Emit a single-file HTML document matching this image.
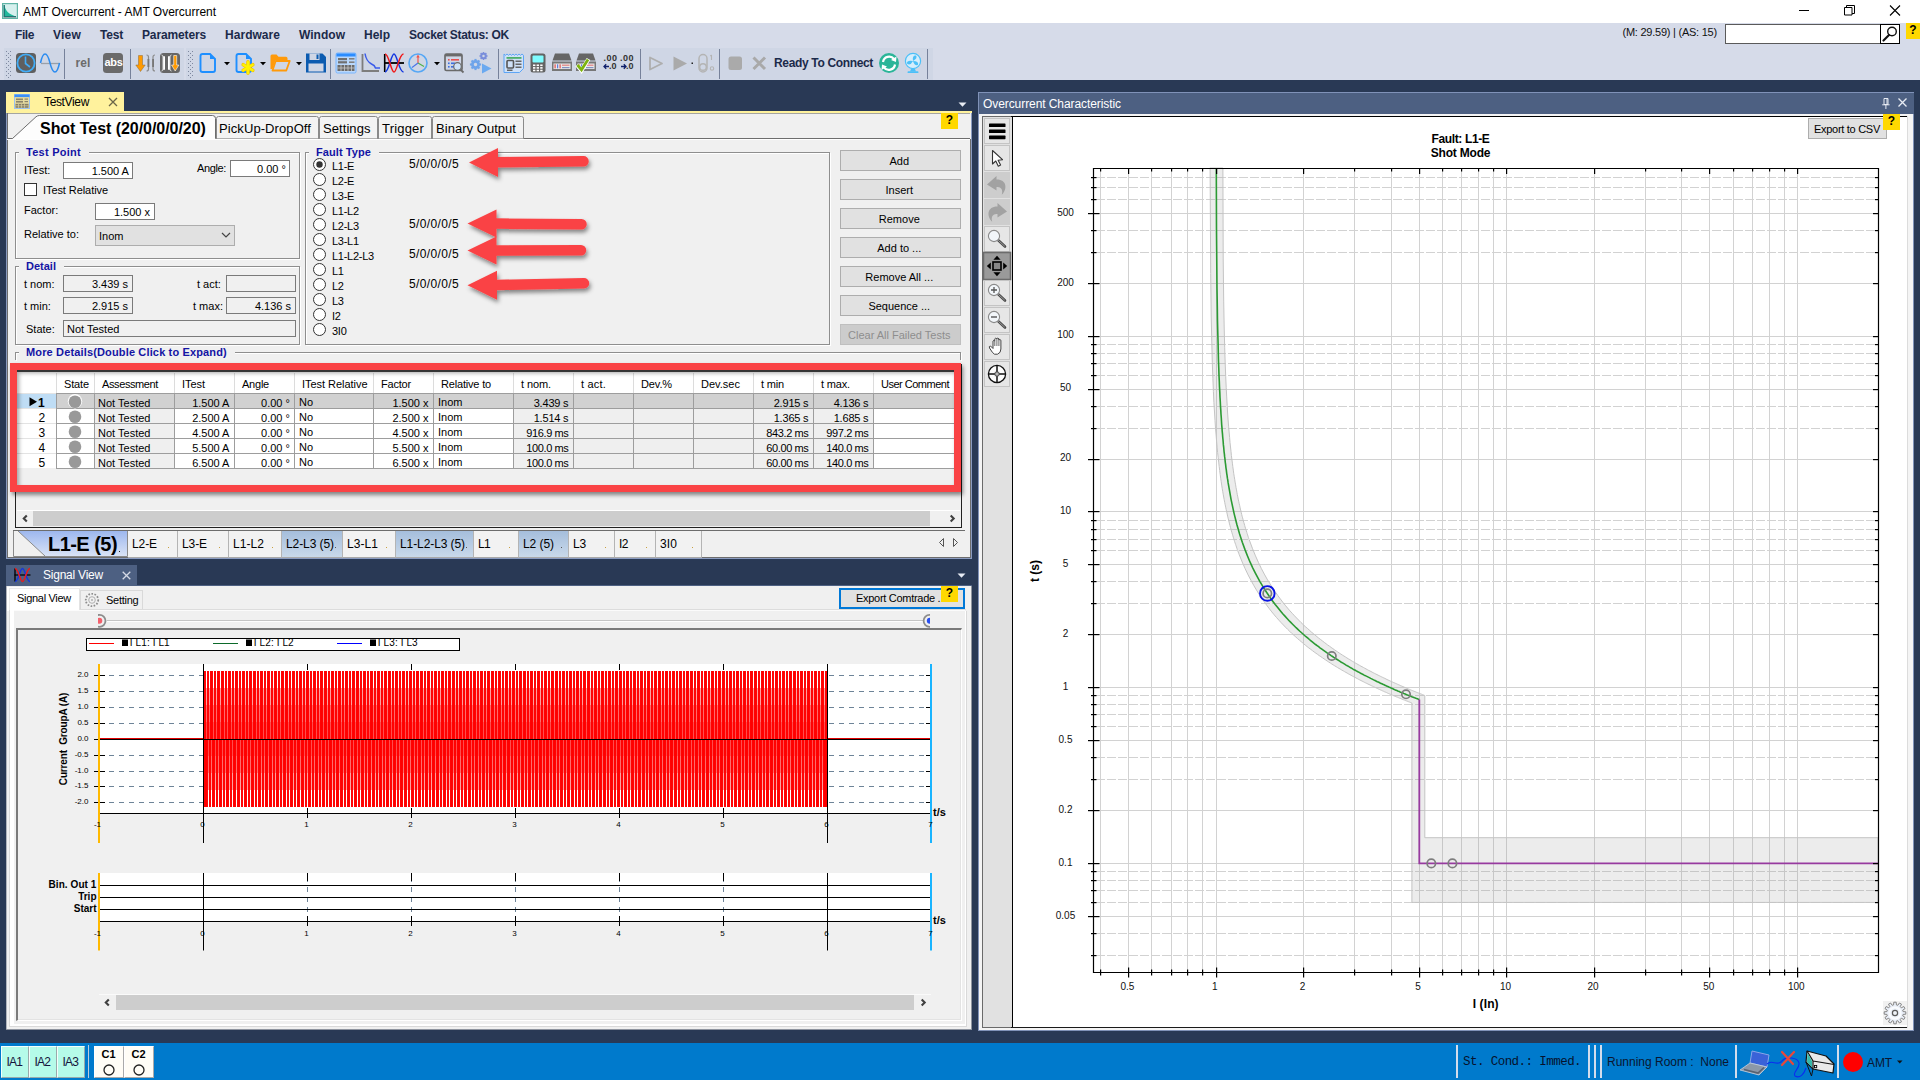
<!DOCTYPE html>
<html><head><meta charset="utf-8"><title>AMT Overcurrent</title>
<style>
html,body{margin:0;padding:0;}
body{width:1920px;height:1080px;overflow:hidden;background:#293955;font-family:"Liberation Sans",sans-serif;font-size:11px;position:relative;}
div,svg,span{position:absolute;}
svg{overflow:visible;}
</style></head><body>

<div style="left:0px;top:0px;width:1920px;height:23px;background:#ffffff;"></div>
<div style="top:3.50px;height:16px;line-height:16px;font-size:12px;color:#000;white-space:pre;letter-spacing:-0.017px;left:23px;">AMT Overcurrent - AMT Overcurrent</div>
<div style="left:0px;top:23px;width:1920px;height:24px;background:#d6dbe9;"></div>
<div style="left:0px;top:47px;width:1920px;height:33px;background:#d6dbe9;"></div>
<div style="left:4px;top:47px;width:929px;height:33px;background:#cfd6e5;"></div>
<svg style="left:2px;top:3px;" width="16" height="16" viewBox="0 0 16 16">
<rect x="0.6" y="0.6" width="14.8" height="14.8" fill="#d6f0ee" stroke="#5fb4a6" stroke-width="1.2"/>
<path d="M2.3 2.3 C3.5 8 7 11.5 13.8 13.4 L2.3 13.4 Z" fill="#22b89c"/>
<path d="M2.2 2 V13.6 H14" fill="none" stroke="#0e6f6c" stroke-width="1.3"/>
<path d="M1.8 14.3 H14" stroke="#8e9aa0" stroke-width=".8"/>
</svg>
<svg style="left:1790px;top:0px;" width="130" height="23" viewBox="0 0 130 23">
<path d="M9 10.5 H19" stroke="#000" stroke-width="1" fill="none"/>
<path d="M54.5 7.5 h7.5 v7.5 h-7.5 z M56.5 7.5 v-2 h8 v8 h-2.5" stroke="#000" stroke-width="1" fill="none"/>
<path d="M100 5.5 L110 15.5 M110 5.5 L100 15.5" stroke="#000" stroke-width="1.1" fill="none"/>
</svg>
<div style="top:26.50px;height:16px;line-height:16px;font-size:12px;color:#1b2a4a;white-space:pre;font-weight:bold;letter-spacing:-0.414px;left:15px;">File</div>
<div style="top:26.50px;height:16px;line-height:16px;font-size:12px;color:#1b2a4a;white-space:pre;font-weight:bold;letter-spacing:0.223px;left:53px;">View</div>
<div style="top:26.50px;height:16px;line-height:16px;font-size:12px;color:#1b2a4a;white-space:pre;font-weight:bold;letter-spacing:-0.195px;left:100px;">Test</div>
<div style="top:26.50px;height:16px;line-height:16px;font-size:12px;color:#1b2a4a;white-space:pre;font-weight:bold;letter-spacing:-0.138px;left:142px;">Parameters</div>
<div style="top:26.50px;height:16px;line-height:16px;font-size:12px;color:#1b2a4a;white-space:pre;font-weight:bold;letter-spacing:0.039px;left:225px;">Hardware</div>
<div style="top:26.50px;height:16px;line-height:16px;font-size:12px;color:#1b2a4a;white-space:pre;font-weight:bold;letter-spacing:0.023px;left:299px;">Window</div>
<div style="top:26.50px;height:16px;line-height:16px;font-size:12px;color:#1b2a4a;white-space:pre;font-weight:bold;left:364px;">Help</div>
<div style="top:26.50px;height:16px;line-height:16px;font-size:12px;color:#1b2a4a;white-space:pre;font-weight:bold;letter-spacing:-0.275px;left:409px;">Socket Status: OK</div>
<div style="top:25.00px;height:15px;line-height:15px;font-size:11px;color:#111;white-space:pre;letter-spacing:-0.239px;left:1622.5px;">(M: 29.59) | (AS: 15)</div>
<div style="left:1725px;top:24px;width:156px;height:20px;background:#fff;border:1px solid #5a5a5a;box-sizing:border-box;"></div>
<div style="left:1880px;top:24px;width:20px;height:20px;background:#fff;border:1px solid #000;box-sizing:border-box;"></div>
<svg style="left:1880px;top:24px;" width="20" height="20" viewBox="0 0 20 20">
<circle cx="12" cy="7.5" r="4.3" fill="none" stroke="#111" stroke-width="1.4"/>
<path d="M9 11 L3.5 16.5" stroke="#111" stroke-width="2.2" stroke-linecap="round"/>
</svg>
<div style="left:1906px;top:23px;width:14px;height:16px;background:#ffd800;"></div>
<div style="top:22.00px;height:16px;line-height:16px;font-size:12px;color:#000;white-space:pre;font-weight:bold;left:1909.34px;">?</div>
<div style="left:184px;top:47px;width:2px;height:33px;background:#d6dbe9;"></div>
<div style="left:0px;top:47px;width:1920px;height:1px;background:#d6dbe9;"></div>
<svg style="left:0;top:0" width="400" height="80"><rect x="6" y="51" width="1" height="1" fill="#7d879e"/><rect x="10" y="51" width="1" height="1" fill="#7d879e"/><rect x="8" y="53" width="1" height="1" fill="#7d879e"/><rect x="6" y="55" width="1" height="1" fill="#7d879e"/><rect x="10" y="55" width="1" height="1" fill="#7d879e"/><rect x="8" y="57" width="1" height="1" fill="#7d879e"/><rect x="6" y="59" width="1" height="1" fill="#7d879e"/><rect x="10" y="59" width="1" height="1" fill="#7d879e"/><rect x="8" y="61" width="1" height="1" fill="#7d879e"/><rect x="6" y="63" width="1" height="1" fill="#7d879e"/><rect x="10" y="63" width="1" height="1" fill="#7d879e"/><rect x="8" y="65" width="1" height="1" fill="#7d879e"/><rect x="6" y="67" width="1" height="1" fill="#7d879e"/><rect x="10" y="67" width="1" height="1" fill="#7d879e"/><rect x="8" y="69" width="1" height="1" fill="#7d879e"/><rect x="6" y="71" width="1" height="1" fill="#7d879e"/><rect x="10" y="71" width="1" height="1" fill="#7d879e"/><rect x="8" y="73" width="1" height="1" fill="#7d879e"/><rect x="6" y="75" width="1" height="1" fill="#7d879e"/><rect x="10" y="75" width="1" height="1" fill="#7d879e"/><rect x="8" y="77" width="1" height="1" fill="#7d879e"/></svg>
<svg style="left:0;top:0" width="400" height="80"><rect x="188" y="51" width="1" height="1" fill="#7d879e"/><rect x="192" y="51" width="1" height="1" fill="#7d879e"/><rect x="190" y="53" width="1" height="1" fill="#7d879e"/><rect x="188" y="55" width="1" height="1" fill="#7d879e"/><rect x="192" y="55" width="1" height="1" fill="#7d879e"/><rect x="190" y="57" width="1" height="1" fill="#7d879e"/><rect x="188" y="59" width="1" height="1" fill="#7d879e"/><rect x="192" y="59" width="1" height="1" fill="#7d879e"/><rect x="190" y="61" width="1" height="1" fill="#7d879e"/><rect x="188" y="63" width="1" height="1" fill="#7d879e"/><rect x="192" y="63" width="1" height="1" fill="#7d879e"/><rect x="190" y="65" width="1" height="1" fill="#7d879e"/><rect x="188" y="67" width="1" height="1" fill="#7d879e"/><rect x="192" y="67" width="1" height="1" fill="#7d879e"/><rect x="190" y="69" width="1" height="1" fill="#7d879e"/><rect x="188" y="71" width="1" height="1" fill="#7d879e"/><rect x="192" y="71" width="1" height="1" fill="#7d879e"/><rect x="190" y="73" width="1" height="1" fill="#7d879e"/><rect x="188" y="75" width="1" height="1" fill="#7d879e"/><rect x="192" y="75" width="1" height="1" fill="#7d879e"/><rect x="190" y="77" width="1" height="1" fill="#7d879e"/></svg>
<div style="left:64px;top:49px;width:1px;height:30px;background:#76819a;"></div>
<div style="left:130px;top:49px;width:1px;height:30px;background:#76819a;"></div>
<div style="left:330px;top:49px;width:1px;height:30px;background:#76819a;"></div>
<div style="left:498px;top:49px;width:1px;height:30px;background:#76819a;"></div>
<div style="left:640px;top:49px;width:1px;height:30px;background:#76819a;"></div>
<div style="left:719px;top:49px;width:1px;height:30px;background:#76819a;"></div>
<div style="left:927px;top:49px;width:1px;height:30px;background:#76819a;"></div>
<svg style="left:0;top:0" width="960" height="80"><rect x="16" y="53" width="20" height="20" rx="3.5" fill="#5f5f5f"/><circle cx="26" cy="63" r="8.6" fill="none" stroke="#42adf7" stroke-width="1.8"/><path d="M25.5 56.5 V63.5 L30 67" fill="none" stroke="#42adf7" stroke-width="1.6"/><path d="M41 63.5 H60" stroke="#9aa0a8" stroke-width="1.3"/><path d="M40.5 63 C43 51 47 51 50 63 C53 75 57 75 59.5 63" fill="none" stroke="#2c8cf0" stroke-width="1.5"/><rect x="103" y="53" width="20" height="20" rx="3.5" fill="#6a6a6a"/><path d="M138.5 55.5 h4 v9.5 h2.7 l-4.7 6.5 l-4.7 -6.5 h2.7 z" fill="#ff9a00" stroke="#8a6a3a" stroke-width=".5"/><path d="M146.5 55 q2 0 2 2 v12 q0 2 -2 2" fill="none" stroke="#8b8b8b" stroke-width="1.2"/><rect x="147.5" y="59" width="1.8" height="8" fill="#777"/><path d="M155 55 q-2 0 -2 2 v12 q0 2 2 2" fill="none" stroke="#8b8b8b" stroke-width="1.2"/><rect x="152.2" y="59" width="1.8" height="8" fill="#777"/><rect x="160" y="53" width="20" height="20" rx="3.5" fill="#666"/><rect x="163" y="56" width="2" height="14" rx="1" fill="#fff"/><rect x="168" y="56" width="2" height="14" rx="1" fill="#fff"/><path d="M161.5 55 q1.5 0 1.5 2 v12 q0 2 -1.5 2 M171.5 55 q-1.5 0 -1.5 2 v12 q0 2 1.5 2" fill="none" stroke="#ddd" stroke-width="1"/><path d="M173.7 55.5 h3 v9.5 h2.2 l-3.7 6 l-3.7 -6 h2.2 z" fill="#ff9a00" stroke="#fff" stroke-width=".6"/><path d="M202.5 54 h7.5 l5 5 v11 q0 2 -2 2 h-10.5 q-2 0 -2 -2 v-14 q0 -2 2 -2 z" fill="none" stroke="#1e8fff" stroke-width="1.9"/><path d="M210 54 v5 h5 z" fill="#1e8fff"/><path d="M238.5 54 h7.5 l5 5 v11 q0 2 -2 2 h-10.5 q-2 0 -2 -2 v-14 q0 -2 2 -2 z" fill="none" stroke="#1e8fff" stroke-width="1.9"/><path d="M246 54 v5 h5 z" fill="#1e8fff"/><path d="M248.0 73.1 L248.0 61.9" stroke="#f2c400" stroke-width="3.6" stroke-linecap="round"/><path d="M252.8 70.3 L243.2 64.7" stroke="#f2c400" stroke-width="3.6" stroke-linecap="round"/><path d="M243.2 70.3 L252.8 64.7" stroke="#f2c400" stroke-width="3.6" stroke-linecap="round"/><path d="M248.0 72.9 L248.0 62.1" stroke="#fff200" stroke-width="2.4" stroke-linecap="round"/><path d="M252.7 70.2 L243.3 64.8" stroke="#fff200" stroke-width="2.4" stroke-linecap="round"/><path d="M243.3 70.2 L252.7 64.8" stroke="#fff200" stroke-width="2.4" stroke-linecap="round"/><path d="M270.5 56 q0 -1.5 1.5 -1.5 h4.5 l2 2.2 h7.5 q1.5 0 1.5 1.5 v1.8 h-12 l-3 9 h-2 z" fill="#ff9a0a"/><path d="M272.5 70.5 l3.2 -9.5 h14 l-3.4 9.5 z" fill="none" stroke="#ff9a0a" stroke-width="1.8" stroke-linejoin="round"/><path d="M306 53.5 h16.5 l3.5 3.5 v15.5 h-20 z" fill="#0b5bb0"/><rect x="309.5" y="53.5" width="10" height="6.5" fill="#cfd6e5"/><rect x="316.5" y="54.5" width="2" height="4.5" fill="#0b5bb0"/><rect x="308.5" y="63.5" width="15" height="8" fill="#cfd6e5"/><rect x="336" y="53" width="20" height="20" rx="1.5" fill="#b9d7fb" stroke="#78b5ff" stroke-width="1"/><rect x="336.5" y="53.5" width="19" height="3" fill="#2b8cff"/><rect x="338" y="58" width="9" height="2.2" fill="#707070"/><rect x="338" y="61.2" width="9" height="2.2" fill="#707070"/><rect x="349" y="58" width="5.5" height="1.6" fill="#808080"/><rect x="349" y="61.4" width="5.5" height="1.6" fill="#808080"/><rect x="337.5" y="65" width="17" height="6" fill="#6b6b6b"/><path d="M337.5 68 h17 M341 65 v6 M344.5 65 v6 M348 65 v6 M351.5 65 v6" stroke="#c9c9c9" stroke-width=".8"/><path d="M362.5 54 V71 H379" fill="none" stroke="#7d7d7d" stroke-width="1.8"/><path d="M365 53.5 C366 60 368 62 371.5 64 C374 65 375 66 375.5 68 H380" fill="none" stroke="#3a5bea" stroke-width="1.5"/><path d="M384.7 54 V72" stroke="#000" stroke-width="1.6"/><path d="M384 63 H404" stroke="#000" stroke-width="1.8"/><path d="M385 72 C389 72 391 54 394 54 C397 54 399 72 403.5 72" fill="none" stroke="#1236e0" stroke-width="1.5"/><path d="M385 54 C389 54 391 72 394 72 C397 72 399 54 403.5 54" fill="none" stroke="#f01818" stroke-width="1.5"/><circle cx="418" cy="63" r="9" fill="none" stroke="#55a7f5" stroke-width="1.6"/><path d="M418 63 V56" stroke="#f0524a" stroke-width="1.2"/><path d="M416.3 57.5 L418 54.5 L419.7 57.5 z" fill="#f0524a"/><path d="M418 63 L424 66.5" stroke="#4fb04a" stroke-width="1.2"/><path d="M418 63 L412 67.5" stroke="#4a74e8" stroke-width="1.2"/><rect x="445" y="54" width="17" height="16.5" rx="1.5" fill="none" stroke="#6a6a6a" stroke-width="1.7"/><rect x="445" y="54" width="17" height="2.4" fill="#6a6a6a"/><rect x="448" y="59" width="1.6" height="1.6" fill="#e85050"/><rect x="451" y="59" width="8" height="1.6" fill="#e85050"/><rect x="448" y="62.5" width="1.6" height="1.6" fill="#3c6ee0"/><rect x="451" y="62.5" width="4" height="1.6" fill="#3c6ee0"/><rect x="448" y="66" width="1.6" height="1.6" fill="#3c6ee0"/><rect x="451" y="66" width="3" height="1.6" fill="#3c6ee0"/><circle cx="457.5" cy="66.5" r="3.8" fill="#cfe2f7" stroke="#6a6a6a" stroke-width="1.2"/><path d="M460.3 69.3 L463.5 72.5" stroke="#6a6a6a" stroke-width="1.8"/><circle cx="475.5" cy="64.5" r="3.10" fill="none" stroke="#6ea4ea" stroke-width="2.75"/><path d="M479.00 64.50 L481.10 64.50" stroke="#6ea4ea" stroke-width="2.10"/><path d="M477.97 66.97 L479.46 68.46" stroke="#6ea4ea" stroke-width="2.10"/><path d="M475.50 68.00 L475.50 70.10" stroke="#6ea4ea" stroke-width="2.10"/><path d="M473.03 66.97 L471.54 68.46" stroke="#6ea4ea" stroke-width="2.10"/><path d="M472.00 64.50 L469.90 64.50" stroke="#6ea4ea" stroke-width="2.10"/><path d="M473.03 62.03 L471.54 60.54" stroke="#6ea4ea" stroke-width="2.10"/><path d="M475.50 61.00 L475.50 58.90" stroke="#6ea4ea" stroke-width="2.10"/><path d="M477.97 62.03 L479.46 60.54" stroke="#6ea4ea" stroke-width="2.10"/><circle cx="483.5" cy="56" r="2.23" fill="none" stroke="#7a8edb" stroke-width="1.98"/><path d="M486.02 56.00 L487.53 56.00" stroke="#7a8edb" stroke-width="1.51"/><path d="M485.28 57.78 L486.35 58.85" stroke="#7a8edb" stroke-width="1.51"/><path d="M483.50 58.52 L483.50 60.03" stroke="#7a8edb" stroke-width="1.51"/><path d="M481.72 57.78 L480.65 58.85" stroke="#7a8edb" stroke-width="1.51"/><path d="M480.98 56.00 L479.47 56.00" stroke="#7a8edb" stroke-width="1.51"/><path d="M481.72 54.22 L480.65 53.15" stroke="#7a8edb" stroke-width="1.51"/><path d="M483.50 53.48 L483.50 51.97" stroke="#7a8edb" stroke-width="1.51"/><path d="M485.28 54.22 L486.35 53.15" stroke="#7a8edb" stroke-width="1.51"/><path d="M482 63.5 L491.5 68.5 L482 73.5 z" fill="#6aa9f0"/><path d="M504 54 l1.5 1.3 l1.5 -1.3 l1.5 1.3 l1.5 -1.3 l1.5 1.3 l1.5 -1.3 l1.5 1.3 l1.5 -1.3 l1.5 1.3 l1.5 -1.3 l1.5 1.3 l1.5 -1.3 l1.5 1.3 V68.5 L519.5 72.5 H504 Z" fill="#cfe1f8" stroke="#5da5f5" stroke-width="1"/><rect x="506.5" y="57" width="15" height="1.8" fill="#4caf6a"/><rect x="507" y="60.5" width="6.5" height="7.5" rx="1" fill="#cfe1f8" stroke="#555" stroke-width="1.6"/><rect x="515.5" y="60.5" width="6" height="1.5" fill="#666"/><rect x="515.5" y="63.5" width="6" height="1.5" fill="#666"/><rect x="515.5" y="66.5" width="6" height="1.5" fill="#666"/><rect x="507" y="69.5" width="5.5" height="1.5" fill="#666"/><rect x="530.5" y="53.5" width="15" height="19" rx="2.5" fill="#636363"/><rect x="532.5" y="55.5" width="11" height="7" rx="1" fill="#7ffcff"/><rect x="533.0" y="64.5" width="2.4" height="1.6" fill="#fff"/><rect x="533.0" y="67.1" width="2.4" height="1.6" fill="#fff"/><rect x="533.0" y="69.7" width="2.4" height="1.6" fill="#fff"/><rect x="536.6" y="64.5" width="2.4" height="1.6" fill="#fff"/><rect x="536.6" y="67.1" width="2.4" height="1.6" fill="#fff"/><rect x="536.6" y="69.7" width="2.4" height="1.6" fill="#fff"/><rect x="540.2" y="64.5" width="2.4" height="1.6" fill="#fff"/><rect x="540.2" y="67.1" width="2.4" height="1.6" fill="#fff"/><rect x="540.2" y="69.7" width="2.4" height="1.6" fill="#fff"/><path d="M555 53.5 h14 l2.5 7 h-19 z" fill="#666"/><rect x="552" y="61.5" width="20" height="9.5" fill="#777"/><rect x="553.5" y="63.5" width="17" height="5.5" fill="#e9e9e9"/><rect x="554.5" y="64.3" width="1.2" height="4" fill="#e05050"/><rect x="557" y="64.3" width="1.2" height="4" fill="#5a7ee0"/><rect x="559.5" y="64.3" width="1.2" height="4" fill="#e05050"/><rect x="562" y="64.6" width="7.5" height="1.2" fill="#e08080"/><rect x="562" y="67" width="7.5" height="1.2" fill="#8090c0"/><path d="M579 53.5 h14 l2.5 7 h-19 z" fill="#666"/><rect x="576" y="61.5" width="20" height="9.5" fill="#777"/><rect x="577.5" y="63.5" width="17" height="5.5" fill="#e9e9e9"/><rect x="578.5" y="64.3" width="1.2" height="4" fill="#e05050"/><rect x="581" y="64.3" width="1.2" height="4" fill="#5a7ee0"/><rect x="583.5" y="64.3" width="1.2" height="4" fill="#e05050"/><rect x="586" y="64.6" width="7.5" height="1.2" fill="#e08080"/><rect x="586" y="67" width="7.5" height="1.2" fill="#8090c0"/><path d="M577 65 L581.5 70.5 L588.5 59" fill="none" stroke="#fff" stroke-width="4.2"/><path d="M577.5 65 L581.5 69.8 L588 59.5" fill="none" stroke="#7db30f" stroke-width="2.8"/><path d="M650 57.5 L662 63.5 L650 69.5 z" fill="none" stroke="#aeaeae" stroke-width="1.8" stroke-linejoin="round"/><path d="M673.5 56.5 L687 63.5 L673.5 70.5 z" fill="#aaa"/><rect x="691.5" y="62.5" width="1.5" height="1.5" fill="#222"/><rect x="699" y="54.5" width="8" height="17.5" rx="4" fill="none" stroke="#b4b4b4" stroke-width="1.5"/><circle cx="703" cy="67" r="3.3" fill="none" stroke="#b4b4b4" stroke-width="1.4"/><path d="M711.5 55 V60 M710.3 56 L711.5 55" stroke="#b4b4b4" stroke-width="1.1" fill="none"/><circle cx="712" cy="68.5" r="1.7" fill="none" stroke="#b4b4b4" stroke-width="1.1"/><rect x="728.5" y="56.5" width="13.5" height="13.5" rx="2.5" fill="#aaa"/><path d="M753.5 57.5 L765 69 M765 57.5 L753.5 69" stroke="#a9a9a9" stroke-width="3"/><circle cx="889" cy="63" r="10" fill="#2bb598"/><path d="M883 62 A6.2 6.2 0 0 1 894 59" fill="none" stroke="#fff" stroke-width="2.2"/><path d="M896.5 56.5 L896 62 L891 60 z" fill="#fff"/><path d="M895 64.5 A6.2 6.2 0 0 1 884 67.5" fill="none" stroke="#fff" stroke-width="2.2"/><path d="M881.5 70 L882 64.5 L887 66.5 z" fill="#fff"/><circle cx="913" cy="61" r="7.6" fill="#d6eefc" stroke="#4cc0f8" stroke-width="1.2"/><path d="M913 61 q-1 -6 3 -5.5 q2 2.5 -3 5.5 q6 0 5 3.8 q-3 2 -5 -3.8 q-3 5.5 -6 2.5 q-0.5 -3.5 6 -2.5" fill="#4cc0f8"/><path d="M911 69 h4 l1 2.5 h-6 z" fill="#4cc0f8"/><rect x="907.5" y="71.3" width="11" height="1.8" rx=".9" fill="#4cc0f8"/></svg>
<svg style="left:223.5px;top:62px;" width="6" height="4" viewBox="0 0 6 4"><path d="M0 0 H6 L3 3.2 Z" fill="#000"/></svg>
<svg style="left:259.5px;top:62px;" width="6" height="4" viewBox="0 0 6 4"><path d="M0 0 H6 L3 3.2 Z" fill="#000"/></svg>
<svg style="left:295.5px;top:62px;" width="6" height="4" viewBox="0 0 6 4"><path d="M0 0 H6 L3 3.2 Z" fill="#000"/></svg>
<svg style="left:433.5px;top:62px;" width="6" height="4" viewBox="0 0 6 4"><path d="M0 0 H6 L3 3.2 Z" fill="#000"/></svg>
<div style="top:54.50px;height:16px;line-height:16px;font-size:12px;color:#6b6b6b;white-space:pre;font-weight:bold;letter-spacing:0.109px;left:75.5px;">rel</div>
<div style="top:54.50px;height:15px;line-height:15px;font-size:11px;color:#fff;white-space:pre;font-weight:bold;letter-spacing:-0.323px;left:104.5px;">abs</div>
<div style="top:52.00px;height:13px;line-height:13px;font-size:9px;color:#333;white-space:pre;font-weight:bold;letter-spacing:0.500px;left:603.5px;">.00</div>
<div style="top:52.00px;height:13px;line-height:13px;font-size:9px;color:#333;white-space:pre;font-weight:bold;letter-spacing:0.500px;left:620px;">.00</div>
<div style="top:60.00px;height:13px;line-height:13px;font-size:9px;color:#333;white-space:pre;font-weight:bold;left:609px;">.0</div>
<div style="top:60.00px;height:13px;line-height:13px;font-size:9px;color:#333;white-space:pre;font-weight:bold;left:626px;">.0</div>
<svg style="left:603px;top:63px;" width="30" height="8" viewBox="0 0 30 8"><path d="M1 3.5 H6 M3.2 1.3 L1 3.5 L3.2 5.7" stroke="#10206a" stroke-width="1.3" fill="none"/><path d="M18 3.5 H23 M20.8 1.3 L23 3.5 L20.8 5.7" stroke="#10206a" stroke-width="1.3" fill="none"/></svg>
<div style="top:54.50px;height:16px;line-height:16px;font-size:12px;color:#1b2a4a;white-space:pre;font-weight:bold;letter-spacing:-0.340px;left:774px;">Ready To Connect</div>
<div style="left:6px;top:92px;width:118px;height:20px;background:#fff29d;"></div>
<div style="left:6px;top:111px;width:966px;height:2px;background:#fff29d;"></div>
<div style="top:94.00px;height:16px;line-height:16px;font-size:12px;color:#000;white-space:pre;letter-spacing:-0.350px;left:44px;">TestView</div>
<svg style="left:108px;top:97px;" width="10" height="10" viewBox="0 0 10 10"><path d="M1 1 L9 9 M9 1 L1 9" stroke="#6b6648" stroke-width="1.3" fill="none"/></svg>
<svg style="left:14px;top:94px;" width="16" height="15" viewBox="0 0 16 15"><rect x="0.5" y="0.5" width="15" height="14" fill="#e7dca0" stroke="#9cc3f2" stroke-width="1"/>
<rect x="0.5" y="0.5" width="15" height="2.6" fill="#3b8ff5"/>
<rect x="2" y="4.5" width="7" height="1.6" fill="#8a846a"/><rect x="2" y="7" width="7" height="1.6" fill="#8a846a"/>
<rect x="10.5" y="4.5" width="3.5" height="1.2" fill="#8a846a"/><rect x="10.5" y="7" width="3.5" height="1.2" fill="#8a846a"/>
<rect x="1.5" y="9.8" width="13" height="4" fill="#857f66"/><path d="M1.5 11.8 h13 M4.5 9.8 v4 M7.5 9.8 v4 M10.5 9.8 v4" stroke="#d8cf9c" stroke-width=".7"/></svg>
<svg style="left:957.5px;top:101.7px;" width="10" height="6" viewBox="0 0 10 6"><path d="M0.5 0.5 H8.5 L4.5 4.8 Z" fill="#e8ecf4"/></svg>
<div style="left:6px;top:113px;width:966px;height:446px;background:#f0f0f0;"></div>
<div style="left:6px;top:113px;width:1px;height:446px;background:#8a9bc0;"></div>
<div style="left:7px;top:113px;width:1px;height:445px;background:#6d6d6d;"></div>
<div style="left:8px;top:113px;width:962px;height:1px;background:#a5a5a0;"></div>
<div style="left:970px;top:139px;width:1px;height:419px;background:#6d6d6d;"></div>
<div style="left:7px;top:557px;width:964px;height:1px;background:#6d6d6d;"></div>
<div style="left:971px;top:113px;width:1px;height:446px;background:#8a9bc0;"></div>
<div style="left:6px;top:558px;width:966px;height:1px;background:#8a9bc0;"></div>
<div style="left:7px;top:138px;width:963px;height:1px;background:#6d6d6d;"></div>
<div style="left:7px;top:139px;width:963px;height:1px;background:#ffffff;"></div>
<svg style="left:7px;top:114px;" width="520" height="26" viewBox="0 0 520 26">
<path d="M3 24.5 L5.5 24.5 L29 2.8 Q30.5 1.5 32.5 1.5 H205.5 Q208.5 1.5 208.5 4.5 V25.5 H3 Z" fill="#fdfdfd"/>
<path d="M3 24.5 L5.5 24.5 L29 2.8 Q30.5 1.5 32.5 1.5 H205.5 Q208.5 1.5 208.5 4.5 V24.5" fill="none" stroke="#6d6d6d" stroke-width="1"/>
<path d="M209.5 24.5 V4.5 Q209.5 2.5 211.5 2.5 H309.5 Q311.5 2.5 311.5 4.5 V24.5" fill="#f3f3f3" stroke="#8a8a8a" stroke-width="1"/>
<path d="M312.5 24.5 V4.5 Q312.5 2.5 314.5 2.5 H368.5 Q370.5 2.5 370.5 4.5 V24.5" fill="#f3f3f3" stroke="#8a8a8a" stroke-width="1"/>
<path d="M371.5 24.5 V4.5 Q371.5 2.5 373.5 2.5 H422.5 Q424.5 2.5 424.5 4.5 V24.5" fill="#f3f3f3" stroke="#8a8a8a" stroke-width="1"/>
<path d="M425.5 24.5 V4.5 Q425.5 2.5 427.5 2.5 H514.5 Q516.5 2.5 516.5 4.5 V24.5" fill="#f3f3f3" stroke="#8a8a8a" stroke-width="1"/>
</svg>
<div style="top:118.80px;height:20px;line-height:20px;font-size:16px;color:#000;white-space:pre;font-weight:bold;letter-spacing:-0.044px;left:40px;">Shot Test (20/0/0/0/20)</div>
<div style="top:119.50px;height:18px;line-height:18px;font-size:13px;color:#000;white-space:pre;letter-spacing:0.086px;left:219px;">PickUp-DropOff</div>
<div style="top:119.50px;height:18px;line-height:18px;font-size:13px;color:#000;white-space:pre;letter-spacing:0.064px;left:323px;">Settings</div>
<div style="top:119.50px;height:18px;line-height:18px;font-size:13px;color:#000;white-space:pre;letter-spacing:0.185px;left:382px;">Trigger</div>
<div style="top:119.50px;height:18px;line-height:18px;font-size:13px;color:#000;white-space:pre;letter-spacing:0.038px;left:436px;">Binary Output</div>
<div style="left:941px;top:113px;width:17px;height:16px;background:#ffd800;"></div>
<div style="top:111.80px;height:16px;line-height:16px;font-size:12px;color:#000;white-space:pre;font-weight:bold;left:945.84px;">?</div>
<div style="left:16px;top:153px;width:285px;height:107px;border:1px solid #ffffff;box-sizing:border-box;"></div>
<div style="left:15px;top:152px;width:285px;height:107px;border:1px solid #8e8e8e;box-sizing:border-box;"></div>
<div style="left:19px;top:150px;width:70px;height:5px;background:#f0f0f0;"></div>
<div style="top:144.50px;height:15px;line-height:15px;font-size:11px;color:#1414a4;white-space:pre;font-weight:bold;letter-spacing:0.263px;left:26px;">Test Point</div>
<div style="top:163.00px;height:15px;line-height:15px;font-size:11px;color:#000;white-space:pre;left:24px;">ITest:</div>
<div style="left:63px;top:162px;width:70px;height:17px;background:#fff;border:1px solid #7a7a7a;box-sizing:border-box;"></div>
<div style="top:163.50px;height:15px;line-height:15px;font-size:11px;color:#000;white-space:pre;left:91.64px;">1.500 A</div>
<div style="top:161.00px;height:15px;line-height:15px;font-size:11px;color:#000;white-space:pre;letter-spacing:-0.370px;left:197px;">Angle:</div>
<div style="left:230px;top:160px;width:60px;height:17px;background:#fff;border:1px solid #7a7a7a;box-sizing:border-box;"></div>
<div style="top:161.50px;height:15px;line-height:15px;font-size:11px;color:#000;white-space:pre;left:257.09px;">0.00 °</div>
<div style="left:24px;top:183px;width:13px;height:13px;background:#fff;border:1px solid #333;box-sizing:border-box;"></div>
<div style="top:182.50px;height:15px;line-height:15px;font-size:11px;color:#000;white-space:pre;letter-spacing:-0.076px;left:43px;">ITest Relative</div>
<div style="top:202.50px;height:15px;line-height:15px;font-size:11px;color:#000;white-space:pre;left:24px;">Factor:</div>
<div style="left:95px;top:203px;width:60px;height:17px;background:#fff;border:1px solid #7a7a7a;box-sizing:border-box;"></div>
<div style="top:204.50px;height:15px;line-height:15px;font-size:11px;color:#000;white-space:pre;left:113.88px;">1.500 x</div>
<div style="top:226.50px;height:15px;line-height:15px;font-size:11px;color:#000;white-space:pre;left:24px;">Relative to:</div>
<div style="left:95px;top:225px;width:140px;height:21px;background:#e1e1e1;border:1px solid #adadad;box-sizing:border-box;"></div>
<div style="top:228.50px;height:15px;line-height:15px;font-size:11px;color:#000;white-space:pre;left:99px;">Inom</div>
<svg style="left:221px;top:232px;" width="10" height="7" viewBox="0 0 10 7"><path d="M1 1 L5 5 L9 1" fill="none" stroke="#444" stroke-width="1.2"/></svg>
<div style="left:16px;top:267px;width:285px;height:79px;border:1px solid #ffffff;box-sizing:border-box;"></div>
<div style="left:15px;top:266px;width:285px;height:79px;border:1px solid #8e8e8e;box-sizing:border-box;"></div>
<div style="left:19px;top:264px;width:45px;height:5px;background:#f0f0f0;"></div>
<div style="top:258.50px;height:15px;line-height:15px;font-size:11px;color:#1414a4;white-space:pre;font-weight:bold;letter-spacing:0.005px;left:26px;">Detail</div>
<div style="top:276.50px;height:15px;line-height:15px;font-size:11px;color:#000;white-space:pre;left:24px;">t nom:</div>
<div style="left:63px;top:275px;width:70px;height:17px;background:#f0f0f0;border:1px solid #7a7a7a;box-sizing:border-box;"></div>
<div style="top:276.50px;height:15px;line-height:15px;font-size:11px;color:#000;white-space:pre;left:91.88px;">3.439 s</div>
<div style="top:276.50px;height:15px;line-height:15px;font-size:11px;color:#000;white-space:pre;left:197px;">t act:</div>
<div style="left:226px;top:275px;width:70px;height:17px;background:#f0f0f0;border:1px solid #7a7a7a;box-sizing:border-box;"></div>
<div style="top:298.50px;height:15px;line-height:15px;font-size:11px;color:#000;white-space:pre;left:24px;">t min:</div>
<div style="left:63px;top:297px;width:70px;height:17px;background:#f0f0f0;border:1px solid #7a7a7a;box-sizing:border-box;"></div>
<div style="top:298.50px;height:15px;line-height:15px;font-size:11px;color:#000;white-space:pre;left:91.88px;">2.915 s</div>
<div style="top:298.50px;height:15px;line-height:15px;font-size:11px;color:#000;white-space:pre;left:193px;">t max:</div>
<div style="left:226px;top:297px;width:70px;height:17px;background:#f0f0f0;border:1px solid #7a7a7a;box-sizing:border-box;"></div>
<div style="top:298.50px;height:15px;line-height:15px;font-size:11px;color:#000;white-space:pre;left:254.88px;">4.136 s</div>
<div style="top:321.50px;height:15px;line-height:15px;font-size:11px;color:#000;white-space:pre;left:26px;">State:</div>
<div style="left:63px;top:320px;width:233px;height:17px;background:#f0f0f0;border:1px solid #7a7a7a;box-sizing:border-box;"></div>
<div style="top:321.50px;height:15px;line-height:15px;font-size:11px;color:#000;white-space:pre;left:67px;">Not Tested</div>
<div style="left:306px;top:153px;width:525px;height:193px;border:1px solid #ffffff;box-sizing:border-box;"></div>
<div style="left:305px;top:152px;width:525px;height:193px;border:1px solid #8e8e8e;box-sizing:border-box;"></div>
<div style="left:309px;top:150px;width:70px;height:5px;background:#f0f0f0;"></div>
<div style="top:144.50px;height:15px;line-height:15px;font-size:11px;color:#1414a4;white-space:pre;font-weight:bold;letter-spacing:0.078px;left:316px;">Fault Type</div>
<div style="top:158.50px;height:15px;line-height:15px;font-size:11px;color:#000;white-space:pre;letter-spacing:-0.291px;left:332px;">L1-E</div>
<div style="top:173.50px;height:15px;line-height:15px;font-size:11px;color:#000;white-space:pre;letter-spacing:-0.291px;left:332px;">L2-E</div>
<div style="top:188.50px;height:15px;line-height:15px;font-size:11px;color:#000;white-space:pre;letter-spacing:-0.291px;left:332px;">L3-E</div>
<div style="top:203.50px;height:15px;line-height:15px;font-size:11px;color:#000;white-space:pre;letter-spacing:-0.282px;left:332px;">L1-L2</div>
<div style="top:218.50px;height:15px;line-height:15px;font-size:11px;color:#000;white-space:pre;letter-spacing:-0.282px;left:332px;">L2-L3</div>
<div style="top:233.50px;height:15px;line-height:15px;font-size:11px;color:#000;white-space:pre;letter-spacing:-0.282px;left:332px;">L3-L1</div>
<div style="top:248.50px;height:15px;line-height:15px;font-size:11px;color:#000;white-space:pre;letter-spacing:-0.275px;left:332px;">L1-L2-L3</div>
<div style="top:263.50px;height:15px;line-height:15px;font-size:11px;color:#000;white-space:pre;letter-spacing:-0.306px;left:332px;">L1</div>
<div style="top:278.50px;height:15px;line-height:15px;font-size:11px;color:#000;white-space:pre;letter-spacing:-0.306px;left:332px;">L2</div>
<div style="top:293.50px;height:15px;line-height:15px;font-size:11px;color:#000;white-space:pre;letter-spacing:-0.306px;left:332px;">L3</div>
<div style="top:308.50px;height:15px;line-height:15px;font-size:11px;color:#000;white-space:pre;letter-spacing:-0.230px;left:332px;">I2</div>
<div style="top:323.50px;height:15px;line-height:15px;font-size:11px;color:#000;white-space:pre;letter-spacing:-0.255px;left:332px;">3I0</div>
<svg style="left:0;top:0" width="400" height="400"><circle cx="319.5" cy="164.5" r="6" fill="#fff" stroke="#333" stroke-width="1"/><circle cx="319.5" cy="164.5" r="3.2" fill="#333"/><circle cx="319.5" cy="179.5" r="6" fill="#fff" stroke="#333" stroke-width="1"/><circle cx="319.5" cy="194.5" r="6" fill="#fff" stroke="#333" stroke-width="1"/><circle cx="319.5" cy="209.5" r="6" fill="#fff" stroke="#333" stroke-width="1"/><circle cx="319.5" cy="224.5" r="6" fill="#fff" stroke="#333" stroke-width="1"/><circle cx="319.5" cy="239.5" r="6" fill="#fff" stroke="#333" stroke-width="1"/><circle cx="319.5" cy="254.5" r="6" fill="#fff" stroke="#333" stroke-width="1"/><circle cx="319.5" cy="269.5" r="6" fill="#fff" stroke="#333" stroke-width="1"/><circle cx="319.5" cy="284.5" r="6" fill="#fff" stroke="#333" stroke-width="1"/><circle cx="319.5" cy="299.5" r="6" fill="#fff" stroke="#333" stroke-width="1"/><circle cx="319.5" cy="314.5" r="6" fill="#fff" stroke="#333" stroke-width="1"/><circle cx="319.5" cy="329.5" r="6" fill="#fff" stroke="#333" stroke-width="1"/></svg>
<div style="top:155.70px;height:16px;line-height:16px;font-size:12px;color:#000;white-space:pre;letter-spacing:0.370px;left:409px;">5/0/0/0/5</div>
<div style="top:215.70px;height:16px;line-height:16px;font-size:12px;color:#000;white-space:pre;letter-spacing:0.370px;left:409px;">5/0/0/0/5</div>
<div style="top:245.70px;height:16px;line-height:16px;font-size:12px;color:#000;white-space:pre;letter-spacing:0.370px;left:409px;">5/0/0/0/5</div>
<div style="top:275.70px;height:16px;line-height:16px;font-size:12px;color:#000;white-space:pre;letter-spacing:0.370px;left:409px;">5/0/0/0/5</div>
<svg style="left:0;top:0" width="700" height="400"><defs><filter id="sh" x="-10%" y="-30%" width="120%" height="170%"><feDropShadow dx="1.5" dy="3" stdDeviation="2" flood-color="#000" flood-opacity="0.45"/></filter></defs><g filter="url(#sh)"><path d="M497 162.3 L583.5 161.3" stroke="#fa4345" stroke-width="10.5" stroke-linecap="round" fill="none"/><path d="M469 162.5 L498 148.0 L498 177.0 Z" fill="#fa4345"/><path d="M495.5 223.6 L581.5 224.3" stroke="#fa4345" stroke-width="10.5" stroke-linecap="round" fill="none"/><path d="M467.5 223.5 L496.5 209.5 L496.5 237.5 Z" fill="#fa4345"/><path d="M495.5 250.5 L581 250.2" stroke="#fa4345" stroke-width="10.5" stroke-linecap="round" fill="none"/><path d="M467.5 250.5 L496.5 236.5 L496.5 264.5 Z" fill="#fa4345"/><path d="M496 285.0 L584 283.2" stroke="#fa4345" stroke-width="10.5" stroke-linecap="round" fill="none"/><path d="M467.5 285.3 L497 270.8 L497 299.8 Z" fill="#fa4345"/></g></svg>
<div style="left:840px;top:150px;width:121px;height:21px;background:#e1e1e1;border:1px solid #adadad;box-sizing:border-box;"></div>
<div style="top:153.50px;height:15px;line-height:15px;font-size:11px;color:#000;white-space:pre;left:889.50px;">Add</div>
<div style="left:840px;top:179px;width:121px;height:21px;background:#e1e1e1;border:1px solid #adadad;box-sizing:border-box;"></div>
<div style="top:182.50px;height:15px;line-height:15px;font-size:11px;color:#000;white-space:pre;left:885.53px;">Insert</div>
<div style="left:840px;top:208px;width:121px;height:21px;background:#e1e1e1;border:1px solid #adadad;box-sizing:border-box;"></div>
<div style="top:211.50px;height:15px;line-height:15px;font-size:11px;color:#000;white-space:pre;left:878.82px;">Remove</div>
<div style="left:840px;top:237px;width:121px;height:21px;background:#e1e1e1;border:1px solid #adadad;box-sizing:border-box;"></div>
<div style="top:240.50px;height:15px;line-height:15px;font-size:11px;color:#000;white-space:pre;left:877.25px;">Add to ...</div>
<div style="left:840px;top:266px;width:121px;height:21px;background:#e1e1e1;border:1px solid #adadad;box-sizing:border-box;"></div>
<div style="top:269.50px;height:15px;line-height:15px;font-size:11px;color:#000;white-space:pre;left:865.35px;">Remove All ...</div>
<div style="left:840px;top:295px;width:121px;height:21px;background:#e1e1e1;border:1px solid #adadad;box-sizing:border-box;"></div>
<div style="top:298.50px;height:15px;line-height:15px;font-size:11px;color:#000;white-space:pre;left:868.38px;">Sequence ...</div>
<div style="left:840px;top:324px;width:121px;height:21px;background:#cccccc;border:1px solid #bfbfbf;box-sizing:border-box;"></div>
<div style="top:327.50px;height:15px;line-height:15px;font-size:11px;color:#8e8e8e;white-space:pre;left:848.03px;">Clear All Failed Tests</div>
<div style="left:16px;top:353px;width:946px;height:8px;border:1px solid #ffffff;box-sizing:border-box;border-bottom:none;"></div>
<div style="left:15px;top:352px;width:946px;height:8px;border:1px solid #8e8e8e;box-sizing:border-box;border-bottom:none;"></div>
<div style="left:19px;top:350px;width:216px;height:5px;background:#f0f0f0;"></div>
<div style="top:345.00px;height:15px;line-height:15px;font-size:11px;color:#1414a4;white-space:pre;font-weight:bold;letter-spacing:0.148px;left:26px;">More Details(Double Click to Expand)</div>
<div style="left:15px;top:364px;width:947px;height:164px;background:#f0f0f0;border:1px solid #222;box-sizing:border-box;"></div>
<div style="left:17px;top:372px;width:937px;height:21px;background:#ffffff;"></div>
<div style="left:56px;top:373px;width:1px;height:20px;background:#dcdcdc;"></div>
<div style="top:376.50px;height:15px;line-height:15px;font-size:11px;color:#000;white-space:pre;letter-spacing:-0.144px;left:64px;">State</div>
<div style="left:94px;top:373px;width:1px;height:20px;background:#dcdcdc;"></div>
<div style="top:376.50px;height:15px;line-height:15px;font-size:11px;color:#000;white-space:pre;letter-spacing:-0.394px;left:102px;">Assessment</div>
<div style="left:174px;top:373px;width:1px;height:20px;background:#dcdcdc;"></div>
<div style="top:376.50px;height:15px;line-height:15px;font-size:11px;color:#000;white-space:pre;letter-spacing:-0.050px;left:182px;">ITest</div>
<div style="left:234px;top:373px;width:1px;height:20px;background:#dcdcdc;"></div>
<div style="top:376.50px;height:15px;line-height:15px;font-size:11px;color:#000;white-space:pre;letter-spacing:-0.231px;left:242px;">Angle</div>
<div style="left:294px;top:373px;width:1px;height:20px;background:#dcdcdc;"></div>
<div style="top:376.50px;height:15px;line-height:15px;font-size:11px;color:#000;white-space:pre;letter-spacing:-0.040px;left:302px;">ITest Relative</div>
<div style="left:373px;top:373px;width:1px;height:20px;background:#dcdcdc;"></div>
<div style="top:376.50px;height:15px;line-height:15px;font-size:11px;color:#000;white-space:pre;letter-spacing:-0.198px;left:381px;">Factor</div>
<div style="left:433px;top:373px;width:1px;height:20px;background:#dcdcdc;"></div>
<div style="top:376.50px;height:15px;line-height:15px;font-size:11px;color:#000;white-space:pre;letter-spacing:-0.182px;left:441px;">Relative to</div>
<div style="left:513px;top:373px;width:1px;height:20px;background:#dcdcdc;"></div>
<div style="top:376.50px;height:15px;line-height:15px;font-size:11px;color:#000;white-space:pre;letter-spacing:-0.099px;left:521px;">t nom.</div>
<div style="left:573px;top:373px;width:1px;height:20px;background:#dcdcdc;"></div>
<div style="top:376.50px;height:15px;line-height:15px;font-size:11px;color:#000;white-space:pre;letter-spacing:0.188px;left:581px;">t act.</div>
<div style="left:633px;top:373px;width:1px;height:20px;background:#dcdcdc;"></div>
<div style="top:376.50px;height:15px;line-height:15px;font-size:11px;color:#000;white-space:pre;letter-spacing:-0.119px;left:641px;">Dev.%</div>
<div style="left:693px;top:373px;width:1px;height:20px;background:#dcdcdc;"></div>
<div style="top:376.50px;height:15px;line-height:15px;font-size:11px;color:#000;white-space:pre;letter-spacing:0.009px;left:701px;">Dev.sec</div>
<div style="left:753px;top:373px;width:1px;height:20px;background:#dcdcdc;"></div>
<div style="top:376.50px;height:15px;line-height:15px;font-size:11px;color:#000;white-space:pre;letter-spacing:-0.169px;left:761px;">t min</div>
<div style="left:813px;top:373px;width:1px;height:20px;background:#dcdcdc;"></div>
<div style="top:376.50px;height:15px;line-height:15px;font-size:11px;color:#000;white-space:pre;letter-spacing:-0.161px;left:821px;">t max.</div>
<div style="left:873px;top:373px;width:1px;height:20px;background:#dcdcdc;"></div>
<div style="top:376.50px;height:15px;line-height:15px;font-size:11px;color:#000;white-space:pre;letter-spacing:-0.497px;left:881px;">User Comment</div>
<div style="left:17px;top:393px;width:39px;height:15px;background:#bfddf5;"></div>
<div style="left:56px;top:393px;width:38px;height:15px;background:#d1d1d1;"></div>
<div style="left:94px;top:393px;width:80px;height:15px;background:#d1d1d1;"></div>
<div style="left:174px;top:393px;width:60px;height:15px;background:#d1d1d1;"></div>
<div style="left:234px;top:393px;width:60px;height:15px;background:#d1d1d1;"></div>
<div style="left:294px;top:393px;width:79px;height:15px;background:#d1d1d1;"></div>
<div style="left:373px;top:393px;width:60px;height:15px;background:#d1d1d1;"></div>
<div style="left:433px;top:393px;width:80px;height:15px;background:#d1d1d1;"></div>
<div style="left:513px;top:393px;width:60px;height:15px;background:#d1d1d1;"></div>
<div style="left:573px;top:393px;width:60px;height:15px;background:#d1d1d1;"></div>
<div style="left:633px;top:393px;width:60px;height:15px;background:#d1d1d1;"></div>
<div style="left:693px;top:393px;width:60px;height:15px;background:#d1d1d1;"></div>
<div style="left:753px;top:393px;width:60px;height:15px;background:#d1d1d1;"></div>
<div style="left:813px;top:393px;width:60px;height:15px;background:#d1d1d1;"></div>
<div style="left:873px;top:393px;width:81px;height:15px;background:#d1d1d1;"></div>
<svg style="left:28.5px;top:397px;" width="9" height="10" viewBox="0 0 9 10"><path d="M0.5 0.3 L8 4.8 L0.5 9.3 Z" fill="#000"/></svg>
<div style="top:395.20px;height:16px;line-height:16px;font-size:12px;color:#000;white-space:pre;font-weight:bold;left:38px;">1</div>
<div style="top:395.70px;height:15px;line-height:15px;font-size:11px;color:#000;white-space:pre;letter-spacing:0.008px;left:98px;">Not Tested</div>
<div style="top:395.70px;height:15px;line-height:15px;font-size:11px;color:#000;white-space:pre;left:192.14px;">1.500 A</div>
<div style="top:395.70px;height:15px;line-height:15px;font-size:11px;color:#000;white-space:pre;left:261.09px;">0.00 °</div>
<div style="top:394.70px;height:15px;line-height:15px;font-size:11px;color:#000;white-space:pre;left:299px;">No</div>
<div style="top:395.70px;height:15px;line-height:15px;font-size:11px;color:#000;white-space:pre;left:392.38px;">1.500 x</div>
<div style="top:394.70px;height:15px;line-height:15px;font-size:11px;color:#000;white-space:pre;left:438px;">Inom</div>
<div style="top:395.70px;height:15px;line-height:15px;font-size:11px;color:#000;white-space:pre;letter-spacing:-0.186px;left:533.67px;">3.439 s</div>
<div style="top:395.70px;height:15px;line-height:15px;font-size:11px;color:#000;white-space:pre;letter-spacing:-0.186px;left:773.67px;">2.915 s</div>
<div style="top:395.70px;height:15px;line-height:15px;font-size:11px;color:#000;white-space:pre;letter-spacing:-0.186px;left:833.67px;">4.136 s</div>
<div style="left:17px;top:408px;width:39px;height:15px;background:#ffffff;"></div>
<div style="left:56px;top:408px;width:38px;height:15px;background:#ffffff;"></div>
<div style="left:94px;top:408px;width:80px;height:15px;background:#efefef;"></div>
<div style="left:174px;top:408px;width:60px;height:15px;background:#ffffff;"></div>
<div style="left:234px;top:408px;width:60px;height:15px;background:#ffffff;"></div>
<div style="left:294px;top:408px;width:79px;height:15px;background:#ffffff;"></div>
<div style="left:373px;top:408px;width:60px;height:15px;background:#ffffff;"></div>
<div style="left:433px;top:408px;width:80px;height:15px;background:#ffffff;"></div>
<div style="left:513px;top:408px;width:60px;height:15px;background:#efefef;"></div>
<div style="left:573px;top:408px;width:60px;height:15px;background:#efefef;"></div>
<div style="left:633px;top:408px;width:60px;height:15px;background:#efefef;"></div>
<div style="left:693px;top:408px;width:60px;height:15px;background:#efefef;"></div>
<div style="left:753px;top:408px;width:60px;height:15px;background:#efefef;"></div>
<div style="left:813px;top:408px;width:60px;height:15px;background:#efefef;"></div>
<div style="left:873px;top:408px;width:81px;height:15px;background:#ffffff;"></div>
<div style="top:410.20px;height:16px;line-height:16px;font-size:12px;color:#000;white-space:pre;left:38.5px;">2</div>
<div style="top:410.70px;height:15px;line-height:15px;font-size:11px;color:#000;white-space:pre;letter-spacing:0.008px;left:98px;">Not Tested</div>
<div style="top:410.70px;height:15px;line-height:15px;font-size:11px;color:#000;white-space:pre;left:192.14px;">2.500 A</div>
<div style="top:410.70px;height:15px;line-height:15px;font-size:11px;color:#000;white-space:pre;left:261.09px;">0.00 °</div>
<div style="top:409.70px;height:15px;line-height:15px;font-size:11px;color:#000;white-space:pre;left:299px;">No</div>
<div style="top:410.70px;height:15px;line-height:15px;font-size:11px;color:#000;white-space:pre;left:392.38px;">2.500 x</div>
<div style="top:409.70px;height:15px;line-height:15px;font-size:11px;color:#000;white-space:pre;left:438px;">Inom</div>
<div style="top:410.70px;height:15px;line-height:15px;font-size:11px;color:#000;white-space:pre;letter-spacing:-0.186px;left:533.67px;">1.514 s</div>
<div style="top:410.70px;height:15px;line-height:15px;font-size:11px;color:#000;white-space:pre;letter-spacing:-0.186px;left:773.67px;">1.365 s</div>
<div style="top:410.70px;height:15px;line-height:15px;font-size:11px;color:#000;white-space:pre;letter-spacing:-0.186px;left:833.67px;">1.685 s</div>
<div style="left:17px;top:423px;width:39px;height:15px;background:#ffffff;"></div>
<div style="left:56px;top:423px;width:38px;height:15px;background:#ffffff;"></div>
<div style="left:94px;top:423px;width:80px;height:15px;background:#efefef;"></div>
<div style="left:174px;top:423px;width:60px;height:15px;background:#ffffff;"></div>
<div style="left:234px;top:423px;width:60px;height:15px;background:#ffffff;"></div>
<div style="left:294px;top:423px;width:79px;height:15px;background:#ffffff;"></div>
<div style="left:373px;top:423px;width:60px;height:15px;background:#ffffff;"></div>
<div style="left:433px;top:423px;width:80px;height:15px;background:#ffffff;"></div>
<div style="left:513px;top:423px;width:60px;height:15px;background:#efefef;"></div>
<div style="left:573px;top:423px;width:60px;height:15px;background:#efefef;"></div>
<div style="left:633px;top:423px;width:60px;height:15px;background:#efefef;"></div>
<div style="left:693px;top:423px;width:60px;height:15px;background:#efefef;"></div>
<div style="left:753px;top:423px;width:60px;height:15px;background:#efefef;"></div>
<div style="left:813px;top:423px;width:60px;height:15px;background:#efefef;"></div>
<div style="left:873px;top:423px;width:81px;height:15px;background:#ffffff;"></div>
<div style="top:425.20px;height:16px;line-height:16px;font-size:12px;color:#000;white-space:pre;left:38.5px;">3</div>
<div style="top:425.70px;height:15px;line-height:15px;font-size:11px;color:#000;white-space:pre;letter-spacing:0.008px;left:98px;">Not Tested</div>
<div style="top:425.70px;height:15px;line-height:15px;font-size:11px;color:#000;white-space:pre;left:192.14px;">4.500 A</div>
<div style="top:425.70px;height:15px;line-height:15px;font-size:11px;color:#000;white-space:pre;left:261.09px;">0.00 °</div>
<div style="top:424.70px;height:15px;line-height:15px;font-size:11px;color:#000;white-space:pre;left:299px;">No</div>
<div style="top:425.70px;height:15px;line-height:15px;font-size:11px;color:#000;white-space:pre;left:392.38px;">4.500 x</div>
<div style="top:424.70px;height:15px;line-height:15px;font-size:11px;color:#000;white-space:pre;left:438px;">Inom</div>
<div style="top:425.70px;height:15px;line-height:15px;font-size:11px;color:#000;white-space:pre;letter-spacing:-0.375px;left:526.22px;">916.9 ms</div>
<div style="top:425.70px;height:15px;line-height:15px;font-size:11px;color:#000;white-space:pre;letter-spacing:-0.375px;left:766.22px;">843.2 ms</div>
<div style="top:425.70px;height:15px;line-height:15px;font-size:11px;color:#000;white-space:pre;letter-spacing:-0.375px;left:826.22px;">997.2 ms</div>
<div style="left:17px;top:438px;width:39px;height:15px;background:#ffffff;"></div>
<div style="left:56px;top:438px;width:38px;height:15px;background:#ffffff;"></div>
<div style="left:94px;top:438px;width:80px;height:15px;background:#efefef;"></div>
<div style="left:174px;top:438px;width:60px;height:15px;background:#ffffff;"></div>
<div style="left:234px;top:438px;width:60px;height:15px;background:#ffffff;"></div>
<div style="left:294px;top:438px;width:79px;height:15px;background:#ffffff;"></div>
<div style="left:373px;top:438px;width:60px;height:15px;background:#ffffff;"></div>
<div style="left:433px;top:438px;width:80px;height:15px;background:#ffffff;"></div>
<div style="left:513px;top:438px;width:60px;height:15px;background:#efefef;"></div>
<div style="left:573px;top:438px;width:60px;height:15px;background:#efefef;"></div>
<div style="left:633px;top:438px;width:60px;height:15px;background:#efefef;"></div>
<div style="left:693px;top:438px;width:60px;height:15px;background:#efefef;"></div>
<div style="left:753px;top:438px;width:60px;height:15px;background:#efefef;"></div>
<div style="left:813px;top:438px;width:60px;height:15px;background:#efefef;"></div>
<div style="left:873px;top:438px;width:81px;height:15px;background:#ffffff;"></div>
<div style="top:440.20px;height:16px;line-height:16px;font-size:12px;color:#000;white-space:pre;left:38.5px;">4</div>
<div style="top:440.70px;height:15px;line-height:15px;font-size:11px;color:#000;white-space:pre;letter-spacing:0.008px;left:98px;">Not Tested</div>
<div style="top:440.70px;height:15px;line-height:15px;font-size:11px;color:#000;white-space:pre;left:192.14px;">5.500 A</div>
<div style="top:440.70px;height:15px;line-height:15px;font-size:11px;color:#000;white-space:pre;left:261.09px;">0.00 °</div>
<div style="top:439.70px;height:15px;line-height:15px;font-size:11px;color:#000;white-space:pre;left:299px;">No</div>
<div style="top:440.70px;height:15px;line-height:15px;font-size:11px;color:#000;white-space:pre;left:392.38px;">5.500 x</div>
<div style="top:439.70px;height:15px;line-height:15px;font-size:11px;color:#000;white-space:pre;left:438px;">Inom</div>
<div style="top:440.70px;height:15px;line-height:15px;font-size:11px;color:#000;white-space:pre;letter-spacing:-0.375px;left:526.22px;">100.0 ms</div>
<div style="top:440.70px;height:15px;line-height:15px;font-size:11px;color:#000;white-space:pre;letter-spacing:-0.375px;left:766.22px;">60.00 ms</div>
<div style="top:440.70px;height:15px;line-height:15px;font-size:11px;color:#000;white-space:pre;letter-spacing:-0.375px;left:826.22px;">140.0 ms</div>
<div style="left:17px;top:453px;width:39px;height:15px;background:#ffffff;"></div>
<div style="left:56px;top:453px;width:38px;height:15px;background:#ffffff;"></div>
<div style="left:94px;top:453px;width:80px;height:15px;background:#efefef;"></div>
<div style="left:174px;top:453px;width:60px;height:15px;background:#ffffff;"></div>
<div style="left:234px;top:453px;width:60px;height:15px;background:#ffffff;"></div>
<div style="left:294px;top:453px;width:79px;height:15px;background:#ffffff;"></div>
<div style="left:373px;top:453px;width:60px;height:15px;background:#ffffff;"></div>
<div style="left:433px;top:453px;width:80px;height:15px;background:#ffffff;"></div>
<div style="left:513px;top:453px;width:60px;height:15px;background:#efefef;"></div>
<div style="left:573px;top:453px;width:60px;height:15px;background:#efefef;"></div>
<div style="left:633px;top:453px;width:60px;height:15px;background:#efefef;"></div>
<div style="left:693px;top:453px;width:60px;height:15px;background:#efefef;"></div>
<div style="left:753px;top:453px;width:60px;height:15px;background:#efefef;"></div>
<div style="left:813px;top:453px;width:60px;height:15px;background:#efefef;"></div>
<div style="left:873px;top:453px;width:81px;height:15px;background:#ffffff;"></div>
<div style="top:455.20px;height:16px;line-height:16px;font-size:12px;color:#000;white-space:pre;left:38.5px;">5</div>
<div style="top:455.70px;height:15px;line-height:15px;font-size:11px;color:#000;white-space:pre;letter-spacing:0.008px;left:98px;">Not Tested</div>
<div style="top:455.70px;height:15px;line-height:15px;font-size:11px;color:#000;white-space:pre;left:192.14px;">6.500 A</div>
<div style="top:455.70px;height:15px;line-height:15px;font-size:11px;color:#000;white-space:pre;left:261.09px;">0.00 °</div>
<div style="top:454.70px;height:15px;line-height:15px;font-size:11px;color:#000;white-space:pre;left:299px;">No</div>
<div style="top:455.70px;height:15px;line-height:15px;font-size:11px;color:#000;white-space:pre;left:392.38px;">6.500 x</div>
<div style="top:454.70px;height:15px;line-height:15px;font-size:11px;color:#000;white-space:pre;left:438px;">Inom</div>
<div style="top:455.70px;height:15px;line-height:15px;font-size:11px;color:#000;white-space:pre;letter-spacing:-0.375px;left:526.22px;">100.0 ms</div>
<div style="top:455.70px;height:15px;line-height:15px;font-size:11px;color:#000;white-space:pre;letter-spacing:-0.375px;left:766.22px;">60.00 ms</div>
<div style="top:455.70px;height:15px;line-height:15px;font-size:11px;color:#000;white-space:pre;letter-spacing:-0.375px;left:826.22px;">140.0 ms</div>
<svg style="left:0;top:0" width="960" height="480"><rect x="56" y="393" width="898" height="1" fill="#9d9d9d"/><rect x="17" y="393" width="39" height="1" fill="#e3e3e3"/><rect x="56" y="408" width="898" height="1" fill="#9d9d9d"/><rect x="17" y="408" width="39" height="1" fill="#e3e3e3"/><rect x="56" y="423" width="898" height="1" fill="#9d9d9d"/><rect x="17" y="423" width="39" height="1" fill="#e3e3e3"/><rect x="56" y="438" width="898" height="1" fill="#9d9d9d"/><rect x="17" y="438" width="39" height="1" fill="#e3e3e3"/><rect x="56" y="453" width="898" height="1" fill="#9d9d9d"/><rect x="17" y="453" width="39" height="1" fill="#e3e3e3"/><rect x="56" y="468" width="898" height="1" fill="#9d9d9d"/><rect x="56" y="393" width="1" height="76" fill="#9d9d9d"/><rect x="94" y="393" width="1" height="76" fill="#9d9d9d"/><rect x="174" y="393" width="1" height="76" fill="#9d9d9d"/><rect x="234" y="393" width="1" height="76" fill="#9d9d9d"/><rect x="294" y="393" width="1" height="76" fill="#9d9d9d"/><rect x="373" y="393" width="1" height="76" fill="#9d9d9d"/><rect x="433" y="393" width="1" height="76" fill="#9d9d9d"/><rect x="513" y="393" width="1" height="76" fill="#9d9d9d"/><rect x="573" y="393" width="1" height="76" fill="#9d9d9d"/><rect x="633" y="393" width="1" height="76" fill="#9d9d9d"/><rect x="693" y="393" width="1" height="76" fill="#9d9d9d"/><rect x="753" y="393" width="1" height="76" fill="#9d9d9d"/><rect x="813" y="393" width="1" height="76" fill="#9d9d9d"/><rect x="873" y="393" width="1" height="76" fill="#9d9d9d"/><circle cx="75" cy="401.2" r="7.2" fill="#ffffff"/><circle cx="75" cy="401.7" r="6.3" fill="#999999"/><circle cx="75" cy="416.7" r="6.3" fill="#999999"/><circle cx="75" cy="431.7" r="6.3" fill="#999999"/><circle cx="75" cy="446.7" r="6.3" fill="#999999"/><circle cx="75" cy="461.7" r="6.3" fill="#999999"/></svg>
<div style="left:17px;top:370px;width:937px;height:2px;background:#4a4a4a;"></div>
<div style="left:10px;top:363px;width:951px;height:129px;border:7.5px solid #fa4345;box-sizing:border-box;box-shadow:2px 3px 4px rgba(0,0,0,.45), inset 2px 3px 4px rgba(0,0,0,.35);"></div>
<div style="left:17px;top:510px;width:943px;height:1px;background:#ffffff;"></div>
<div style="left:17px;top:511px;width:943px;height:15px;background:#f0f0f0;"></div>
<div style="left:33px;top:511px;width:897px;height:15px;background:#cdcdcd;"></div>
<svg style="left:20px;top:513px;" width="10" height="11" viewBox="0 0 10 11"><path d="M6.8 2.5 L3.8 5.5 L6.8 8.5" fill="none" stroke="#404040" stroke-width="2.1"/></svg>
<svg style="left:946px;top:513px;" width="10" height="11" viewBox="0 0 10 11"><path d="M4.7 2.5 L7.7 5.5 L4.7 8.5" fill="none" stroke="#404040" stroke-width="2.1"/></svg>
<svg style="left:0;top:0" width="980" height="560">
<defs><linearGradient id="tg" x1="0" y1="0" x2="0" y2="1"><stop offset="0" stop-color="#9db7ee"/><stop offset="1" stop-color="#d9e3f6"/></linearGradient>
<linearGradient id="tg2" x1="0" y1="0" x2="0" y2="1"><stop offset="0" stop-color="#a9c4ef"/><stop offset="1" stop-color="#dde7f6"/></linearGradient></defs>
<path d="M13.5 556.5 V530.5 H127.5 V556.5 Z" fill="#f0f0f0" stroke="#8a8a8a" stroke-width="1"/>
<path d="M18 531 H127 V556 H45 Z" fill="url(#tg)"/>
<path d="M18 531 L45 556" stroke="#8a8a8a" stroke-width="1" fill="none"/>
</svg>
<div style="top:532.00px;height:24px;line-height:24px;font-size:20px;color:#000;white-space:pre;font-weight:bold;letter-spacing:-0.543px;left:48px;">L1-E (5)</div>
<div style="left:119px;top:551px;width:1px;height:1px;background:#222;"></div>
<div style="left:128px;top:531px;width:49px;height:26px;background:#f2f2f2;border-right:1px solid #b4b4b4;border-bottom:1px solid #a8a8a8;"></div>
<div style="top:536.00px;height:16px;line-height:16px;font-size:12px;color:#000;white-space:pre;letter-spacing:-0.086px;left:132px;">L2-E</div>
<div style="left:168px;top:547px;width:1px;height:1px;background:#c8a040;"></div>
<div style="left:178px;top:531px;width:50px;height:26px;background:#f2f2f2;border-right:1px solid #b4b4b4;border-bottom:1px solid #a8a8a8;"></div>
<div style="top:536.00px;height:16px;line-height:16px;font-size:12px;color:#000;white-space:pre;letter-spacing:-0.086px;left:182px;">L3-E</div>
<div style="left:219px;top:547px;width:1px;height:1px;background:#c8a040;"></div>
<div style="left:229px;top:531px;width:52px;height:26px;background:#f2f2f2;border-right:1px solid #b4b4b4;border-bottom:1px solid #a8a8a8;"></div>
<div style="top:536.00px;height:16px;line-height:16px;font-size:12px;color:#000;white-space:pre;letter-spacing:0.062px;left:233px;">L1-L2</div>
<div style="left:272px;top:547px;width:1px;height:1px;background:#c8a040;"></div>
<div style="left:282px;top:531px;width:60px;height:26px;background:linear-gradient(#a5bedc,#c9d9ea);border-right:1px solid #b4b4b4;border-bottom:1px solid #a8a8a8;"></div>
<div style="top:536.00px;height:16px;line-height:16px;font-size:12px;color:#000;white-space:pre;letter-spacing:-0.076px;left:286px;">L2-L3 (5)</div>
<div style="left:335px;top:547px;width:1px;height:1px;background:#555;"></div>
<div style="left:343px;top:531px;width:52px;height:26px;background:#f2f2f2;border-right:1px solid #b4b4b4;border-bottom:1px solid #a8a8a8;"></div>
<div style="top:536.00px;height:16px;line-height:16px;font-size:12px;color:#000;white-space:pre;letter-spacing:0.062px;left:347px;">L3-L1</div>
<div style="left:386px;top:547px;width:1px;height:1px;background:#c8a040;"></div>
<div style="left:396px;top:531px;width:77px;height:26px;background:linear-gradient(#a5bedc,#c9d9ea);border-right:1px solid #b4b4b4;border-bottom:1px solid #a8a8a8;"></div>
<div style="top:536.00px;height:16px;line-height:16px;font-size:12px;color:#000;white-space:pre;letter-spacing:-0.086px;left:400px;">L1-L2-L3 (5)</div>
<div style="left:466px;top:547px;width:1px;height:1px;background:#555;"></div>
<div style="left:474px;top:531px;width:44px;height:26px;background:#f2f2f2;border-right:1px solid #b4b4b4;border-bottom:1px solid #a8a8a8;"></div>
<div style="top:536.00px;height:16px;line-height:16px;font-size:12px;color:#000;white-space:pre;letter-spacing:-0.672px;left:478px;">L1</div>
<div style="left:509px;top:547px;width:1px;height:1px;background:#c8a040;"></div>
<div style="left:519px;top:531px;width:49px;height:26px;background:linear-gradient(#a5bedc,#c9d9ea);border-right:1px solid #b4b4b4;border-bottom:1px solid #a8a8a8;"></div>
<div style="top:536.00px;height:16px;line-height:16px;font-size:12px;color:#000;white-space:pre;letter-spacing:-0.057px;left:523px;">L2 (5)</div>
<div style="left:561px;top:547px;width:1px;height:1px;background:#555;"></div>
<div style="left:569px;top:531px;width:45px;height:26px;background:#f2f2f2;border-right:1px solid #b4b4b4;border-bottom:1px solid #a8a8a8;"></div>
<div style="top:536.00px;height:16px;line-height:16px;font-size:12px;color:#000;white-space:pre;letter-spacing:-0.172px;left:573px;">L3</div>
<div style="left:605px;top:547px;width:1px;height:1px;background:#c8a040;"></div>
<div style="left:615px;top:531px;width:40px;height:26px;background:#f2f2f2;border-right:1px solid #b4b4b4;border-bottom:1px solid #a8a8a8;"></div>
<div style="top:536.00px;height:16px;line-height:16px;font-size:12px;color:#000;white-space:pre;letter-spacing:-0.500px;left:619px;">I2</div>
<div style="left:646px;top:547px;width:1px;height:1px;background:#c8a040;"></div>
<div style="left:656px;top:531px;width:45px;height:26px;background:#f2f2f2;border-right:1px solid #b4b4b4;border-bottom:1px solid #a8a8a8;"></div>
<div style="top:536.00px;height:16px;line-height:16px;font-size:12px;color:#000;white-space:pre;letter-spacing:0.109px;left:660px;">3I0</div>
<div style="left:692px;top:547px;width:1px;height:1px;background:#c8a040;"></div>
<div style="left:13px;top:530px;width:952px;height:1px;background:#6d6d6d;"></div>
<svg style="left:936px;top:537px;" width="24" height="11" viewBox="0 0 24 11"><path d="M7.5 1.5 L3.5 5.5 L7.5 9.5 Z" fill="none" stroke="#555" stroke-width="1"/><path d="M17.5 1.5 L21.5 5.5 L17.5 9.5 Z" fill="none" stroke="#555" stroke-width="1"/></svg>
<div style="left:6px;top:565px;width:131px;height:21px;background:#4d6082;"></div>
<svg style="left:14px;top:567px;" width="17" height="16" viewBox="0 0 17 16"><path d="M1 1.5 V14.5" stroke="#000" stroke-width="1.3"/><path d="M0.5 8 H16.5" stroke="#000" stroke-width="1.2"/>
<path d="M1 14.5 C4.5 14.5 6 1.5 8.5 1.5 C11 1.5 12.5 14.5 16 14.5" fill="none" stroke="#1236e0" stroke-width="1.4"/>
<path d="M1 1.5 C4.5 1.5 6 14.5 8.5 14.5 C11 14.5 12.5 1.5 16 1.5" fill="none" stroke="#f01818" stroke-width="1.4"/></svg>
<div style="top:566.50px;height:16px;line-height:16px;font-size:12px;color:#fff;white-space:pre;letter-spacing:-0.226px;left:43px;">Signal View</div>
<svg style="left:122px;top:570.5px;" width="9" height="9" viewBox="0 0 9 9"><path d="M0.7 0.7 L8.3 8.3 M8.3 0.7 L0.7 8.3" stroke="#d5dae6" stroke-width="1.3" fill="none"/></svg>
<svg style="left:957px;top:573px;" width="10" height="6" viewBox="0 0 10 6"><path d="M0.5 0.5 H8.5 L4.5 4.8 Z" fill="#e8ecf4"/></svg>
<div style="left:6px;top:585px;width:966px;height:1px;background:#4d6082;"></div>
<div style="left:6px;top:586px;width:966px;height:444px;background:#f0f0f0;"></div>
<div style="left:6px;top:586px;width:1px;height:444px;background:#b0b4bc;"></div>
<div style="left:971px;top:586px;width:1px;height:444px;background:#8e949f;"></div>
<div style="left:6px;top:1029px;width:966px;height:1px;background:#8e949f;"></div>
<div style="left:7px;top:587px;width:73px;height:24px;background:#ffffff;"></div>
<div style="left:9px;top:588px;width:71px;height:1px;background:#ececec;"></div>
<div style="left:9px;top:588px;width:1px;height:22px;background:#ececec;"></div>
<div style="left:79px;top:589px;width:1px;height:21px;background:#e3e3e3;"></div>
<div style="top:591.00px;height:15px;line-height:15px;font-size:11px;color:#000;white-space:pre;letter-spacing:-0.300px;left:17px;">Signal View</div>
<div style="left:80px;top:590px;width:63px;height:19px;background:#f0f0f0;border:1px solid #d9d9d9;box-sizing:border-box;border-bottom:none;"></div>
<svg style="left:84px;top:592px;" width="16" height="16" viewBox="0 0 16 16"><circle cx="8" cy="8" r="6.2" fill="none" stroke="#8d8d8d" stroke-width="1.8" stroke-dasharray="1.6 1.5"/><circle cx="8" cy="8" r="3.3" fill="none" stroke="#b0b0b0" stroke-width="1"/><circle cx="8" cy="8" r="1" fill="#b0b0b0"/></svg>
<div style="top:593.00px;height:15px;line-height:15px;font-size:11px;color:#000;white-space:pre;letter-spacing:-0.254px;left:106px;">Setting</div>
<div style="left:80px;top:609px;width:886px;height:1px;background:#dcdcdc;"></div>
<div style="left:14px;top:610px;width:951px;height:1px;background:#fbfbfb;"></div>
<div style="left:839px;top:588px;width:126px;height:21px;background:#e1e1e1;border:2px solid #0078d7;box-sizing:border-box;"></div>
<div style="top:591.30px;height:15px;line-height:15px;font-size:11px;color:#000;white-space:pre;letter-spacing:-0.286px;left:856px;">Export Comtrade ...</div>
<div style="left:941px;top:586px;width:17px;height:16px;background:#ffd800;"></div>
<div style="top:584.70px;height:16px;line-height:16px;font-size:12px;color:#000;white-space:pre;font-weight:bold;left:945.84px;">?</div>
<div style="left:107px;top:620px;width:818px;height:1px;background:#c4c4c4;"></div>
<div style="left:107px;top:621px;width:818px;height:1px;background:#fdfdfd;"></div>
<svg style="left:98px;top:613px;overflow:hidden;" width="10" height="16" viewBox="0 0 10 16"><circle cx="1.5" cy="7.8" r="6" fill="#f0f0f0" stroke="#8c8c8c" stroke-width="1.8"/><circle cx="1.3" cy="7.8" r="3" fill="#f4606c"/></svg>
<svg style="left:920px;top:613px;overflow:hidden;" width="10" height="16" viewBox="0 0 10 16"><circle cx="9.6" cy="7.8" r="6" fill="#f0f0f0" stroke="#8c8c8c" stroke-width="1.8"/><circle cx="9.8" cy="7.8" r="3" fill="#2a50f0"/></svg>
<div style="left:9px;top:610px;width:1px;height:417px;background:#d9d9d9;"></div>
<div style="left:10px;top:610px;width:4px;height:416px;background:#ffffff;"></div>
<div style="left:10px;top:1024px;width:956px;height:2px;background:#ffffff;"></div>
<div style="left:9px;top:1026px;width:958px;height:1px;background:#d9d9d9;"></div>
<div style="left:965px;top:611px;width:1px;height:414px;background:#ffffff;"></div>
<div style="left:966px;top:611px;width:1px;height:416px;background:#d9d9d9;"></div>
<div style="left:16px;top:628px;width:946px;height:393px;background:#f0f0f0;box-sizing:border-box;border-top:2px solid #7a7a7a;border-left:2px solid #7a7a7a;border-right:1px solid #ffffff;border-bottom:1px solid #ffffff;"></div>
<div style="left:960px;top:630px;width:1px;height:390px;background:#e3e3e3;"></div>
<div style="left:18px;top:1019px;width:943px;height:1px;background:#e3e3e3;"></div>
<div style="left:86px;top:638px;width:373.5px;height:13px;background:#fff;border:1px solid #000;box-sizing:border-box;overflow:hidden;"></div>
<svg style="left:0;top:0" width="500" height="660"><rect x="89" y="643" width="25" height="1" fill="#ff0000"/><rect x="122" y="639.5" width="6" height="6.5" fill="#000"/><rect x="213" y="643" width="25" height="1" fill="#0c6a2a"/><rect x="246" y="639.5" width="6" height="6.5" fill="#000"/><rect x="337" y="643" width="25" height="1" fill="#0000ff"/><rect x="370" y="639.5" width="6" height="6.5" fill="#000"/></svg>
<div style="top:636.60px;height:12px;line-height:12px;font-size:10px;color:#000;white-space:pre;letter-spacing:0.106px;left:129.8px;">I L1: I L1</div>
<div style="top:636.60px;height:12px;line-height:12px;font-size:10px;color:#000;white-space:pre;letter-spacing:0.106px;left:253.8px;">I L2: I L2</div>
<div style="top:636.60px;height:12px;line-height:12px;font-size:10px;color:#000;white-space:pre;letter-spacing:0.106px;left:377.8px;">I L3: I L3</div>
<svg style="left:0;top:0" width="980" height="1030"><rect x="99" y="664" width="832" height="149.5" fill="#fff"/><path d="M109 802.5 H931" stroke="#6e8498" stroke-width="1" stroke-dasharray="5 5" fill="none"/><path d="M109 786.5 H931" stroke="#6e8498" stroke-width="1" stroke-dasharray="5 5" fill="none"/><path d="M109 771.5 H931" stroke="#6e8498" stroke-width="1" stroke-dasharray="5 5" fill="none"/><path d="M109 755.5 H931" stroke="#6e8498" stroke-width="1" stroke-dasharray="5 5" fill="none"/><path d="M109 723.5 H931" stroke="#6e8498" stroke-width="1" stroke-dasharray="5 5" fill="none"/><path d="M109 707.5 H931" stroke="#6e8498" stroke-width="1" stroke-dasharray="5 5" fill="none"/><path d="M109 691.5 H931" stroke="#6e8498" stroke-width="1" stroke-dasharray="5 5" fill="none"/><path d="M109 675.5 H931" stroke="#6e8498" stroke-width="1" stroke-dasharray="5 5" fill="none"/><defs><linearGradient id="gu" gradientUnits="userSpaceOnUse" x1="0" y1="671" x2="0" y2="739"><stop offset="0" stop-color="#fff" stop-opacity="1"/><stop offset="0.25" stop-color="#fff" stop-opacity="1"/><stop offset="0.25" stop-color="#fff" stop-opacity="0.62"/><stop offset="0.5" stop-color="#fff" stop-opacity="0.62"/><stop offset="0.5" stop-color="#fff" stop-opacity="0.42"/><stop offset="0.75" stop-color="#fff" stop-opacity="0.42"/><stop offset="0.75" stop-color="#fff" stop-opacity="0.3"/><stop offset="1" stop-color="#fff" stop-opacity="0.3"/></linearGradient><linearGradient id="gd" gradientUnits="userSpaceOnUse" x1="0" y1="807" x2="0" y2="739"><stop offset="0" stop-color="#fff" stop-opacity="1"/><stop offset="0.25" stop-color="#fff" stop-opacity="1"/><stop offset="0.25" stop-color="#fff" stop-opacity="0.62"/><stop offset="0.5" stop-color="#fff" stop-opacity="0.62"/><stop offset="0.5" stop-color="#fff" stop-opacity="0.42"/><stop offset="0.75" stop-color="#fff" stop-opacity="0.42"/><stop offset="0.75" stop-color="#fff" stop-opacity="0.3"/><stop offset="1" stop-color="#fff" stop-opacity="0.3"/></linearGradient></defs><rect x="204" y="671" width="623" height="136" fill="#ff0000"/><path d="M206.5 671V739M209.5 671V739M213.5 671V739M216.5 671V739M220.5 671V739M224.5 671V739M227.5 671V739M231.5 671V739M234.5 671V739M238.5 671V739M241.5 671V739M245.5 671V739M248.5 671V739M252.5 671V739M256.5 671V739M259.5 671V739M263.5 671V739M266.5 671V739M270.5 671V739M273.5 671V739M277.5 671V739M280.5 671V739M284.5 671V739M288.5 671V739M291.5 671V739M295.5 671V739M298.5 671V739M302.5 671V739M305.5 671V739M309.5 671V739M312.5 671V739M316.5 671V739M319.5 671V739M323.5 671V739M327.5 671V739M330.5 671V739M334.5 671V739M337.5 671V739M341.5 671V739M344.5 671V739M348.5 671V739M351.5 671V739M355.5 671V739M359.5 671V739M362.5 671V739M366.5 671V739M369.5 671V739M373.5 671V739M376.5 671V739M380.5 671V739M383.5 671V739M387.5 671V739M391.5 671V739M394.5 671V739M398.5 671V739M401.5 671V739M405.5 671V739M408.5 671V739M412.5 671V739M415.5 671V739M419.5 671V739M423.5 671V739M426.5 671V739M430.5 671V739M433.5 671V739M437.5 671V739M440.5 671V739M444.5 671V739M447.5 671V739M451.5 671V739M455.5 671V739M458.5 671V739M462.5 671V739M465.5 671V739M469.5 671V739M472.5 671V739M476.5 671V739M479.5 671V739M483.5 671V739M486.5 671V739M490.5 671V739M494.5 671V739M497.5 671V739M501.5 671V739M504.5 671V739M508.5 671V739M511.5 671V739M515.5 671V739M518.5 671V739M522.5 671V739M526.5 671V739M529.5 671V739M533.5 671V739M536.5 671V739M540.5 671V739M543.5 671V739M547.5 671V739M550.5 671V739M554.5 671V739M558.5 671V739M561.5 671V739M565.5 671V739M568.5 671V739M572.5 671V739M575.5 671V739M579.5 671V739M582.5 671V739M586.5 671V739M590.5 671V739M593.5 671V739M597.5 671V739M600.5 671V739M604.5 671V739M607.5 671V739M611.5 671V739M614.5 671V739M618.5 671V739M622.5 671V739M625.5 671V739M629.5 671V739M632.5 671V739M636.5 671V739M639.5 671V739M643.5 671V739M646.5 671V739M650.5 671V739M653.5 671V739M657.5 671V739M661.5 671V739M664.5 671V739M668.5 671V739M671.5 671V739M675.5 671V739M678.5 671V739M682.5 671V739M685.5 671V739M689.5 671V739M693.5 671V739M696.5 671V739M700.5 671V739M703.5 671V739M707.5 671V739M710.5 671V739M714.5 671V739M717.5 671V739M721.5 671V739M725.5 671V739M728.5 671V739M732.5 671V739M735.5 671V739M739.5 671V739M742.5 671V739M746.5 671V739M749.5 671V739M753.5 671V739M757.5 671V739M760.5 671V739M764.5 671V739M767.5 671V739M771.5 671V739M774.5 671V739M778.5 671V739M781.5 671V739M785.5 671V739M788.5 671V739M792.5 671V739M796.5 671V739M799.5 671V739M803.5 671V739M806.5 671V739M810.5 671V739M813.5 671V739M817.5 671V739M820.5 671V739M824.5 671V739" stroke="url(#gu)" stroke-width="1.05" fill="none"/><path d="M208.5 739V807M211.5 739V807M215.5 739V807M218.5 739V807M222.5 739V807M225.5 739V807M229.5 739V807M232.5 739V807M236.5 739V807M240.5 739V807M243.5 739V807M247.5 739V807M250.5 739V807M254.5 739V807M257.5 739V807M261.5 739V807M264.5 739V807M268.5 739V807M272.5 739V807M275.5 739V807M279.5 739V807M282.5 739V807M286.5 739V807M289.5 739V807M293.5 739V807M296.5 739V807M300.5 739V807M304.5 739V807M307.5 739V807M311.5 739V807M314.5 739V807M318.5 739V807M321.5 739V807M325.5 739V807M328.5 739V807M332.5 739V807M335.5 739V807M339.5 739V807M343.5 739V807M346.5 739V807M350.5 739V807M353.5 739V807M357.5 739V807M360.5 739V807M364.5 739V807M367.5 739V807M371.5 739V807M375.5 739V807M378.5 739V807M382.5 739V807M385.5 739V807M389.5 739V807M392.5 739V807M396.5 739V807M399.5 739V807M403.5 739V807M407.5 739V807M410.5 739V807M414.5 739V807M417.5 739V807M421.5 739V807M424.5 739V807M428.5 739V807M431.5 739V807M435.5 739V807M439.5 739V807M442.5 739V807M446.5 739V807M449.5 739V807M453.5 739V807M456.5 739V807M460.5 739V807M463.5 739V807M467.5 739V807M471.5 739V807M474.5 739V807M478.5 739V807M481.5 739V807M485.5 739V807M488.5 739V807M492.5 739V807M495.5 739V807M499.5 739V807M502.5 739V807M506.5 739V807M510.5 739V807M513.5 739V807M517.5 739V807M520.5 739V807M524.5 739V807M527.5 739V807M531.5 739V807M534.5 739V807M538.5 739V807M542.5 739V807M545.5 739V807M549.5 739V807M552.5 739V807M556.5 739V807M559.5 739V807M563.5 739V807M566.5 739V807M570.5 739V807M574.5 739V807M577.5 739V807M581.5 739V807M584.5 739V807M588.5 739V807M591.5 739V807M595.5 739V807M598.5 739V807M602.5 739V807M606.5 739V807M609.5 739V807M613.5 739V807M616.5 739V807M620.5 739V807M623.5 739V807M627.5 739V807M630.5 739V807M634.5 739V807M637.5 739V807M641.5 739V807M645.5 739V807M648.5 739V807M652.5 739V807M655.5 739V807M659.5 739V807M662.5 739V807M666.5 739V807M669.5 739V807M673.5 739V807M677.5 739V807M680.5 739V807M684.5 739V807M687.5 739V807M691.5 739V807M694.5 739V807M698.5 739V807M701.5 739V807M705.5 739V807M709.5 739V807M712.5 739V807M716.5 739V807M719.5 739V807M723.5 739V807M726.5 739V807M730.5 739V807M733.5 739V807M737.5 739V807M741.5 739V807M744.5 739V807M748.5 739V807M751.5 739V807M755.5 739V807M758.5 739V807M762.5 739V807M765.5 739V807M769.5 739V807M773.5 739V807M776.5 739V807M780.5 739V807M783.5 739V807M787.5 739V807M790.5 739V807M794.5 739V807M797.5 739V807M801.5 739V807M804.5 739V807M808.5 739V807M812.5 739V807M815.5 739V807M819.5 739V807M822.5 739V807" stroke="url(#gd)" stroke-width="1.05" fill="none"/><rect x="99" y="738" width="105" height="1.2" fill="#e00000"/><rect x="827" y="738" width="104" height="1.2" fill="#e00000"/><rect x="94" y="739" width="837" height="1" fill="#000"/><rect x="94" y="802" width="11" height="1" fill="#000"/><rect x="926" y="802" width="5" height="1" fill="#000"/><rect x="94" y="786" width="11" height="1" fill="#000"/><rect x="926" y="786" width="5" height="1" fill="#000"/><rect x="94" y="771" width="11" height="1" fill="#000"/><rect x="926" y="771" width="5" height="1" fill="#000"/><rect x="94" y="755" width="11" height="1" fill="#000"/><rect x="926" y="755" width="5" height="1" fill="#000"/><rect x="94" y="739" width="11" height="1" fill="#000"/><rect x="926" y="739" width="5" height="1" fill="#000"/><rect x="94" y="723" width="11" height="1" fill="#000"/><rect x="926" y="723" width="5" height="1" fill="#000"/><rect x="94" y="707" width="11" height="1" fill="#000"/><rect x="926" y="707" width="5" height="1" fill="#000"/><rect x="94" y="691" width="11" height="1" fill="#000"/><rect x="926" y="691" width="5" height="1" fill="#000"/><rect x="94" y="675" width="11" height="1" fill="#000"/><rect x="926" y="675" width="5" height="1" fill="#000"/><rect x="99" y="813" width="832" height="1" fill="#000"/><rect x="307" y="664" width="1" height="6" fill="#000"/><rect x="307" y="808" width="1" height="10" fill="#000"/><rect x="411" y="664" width="1" height="6" fill="#000"/><rect x="411" y="808" width="1" height="10" fill="#000"/><rect x="515" y="664" width="1" height="6" fill="#000"/><rect x="515" y="808" width="1" height="10" fill="#000"/><rect x="619" y="664" width="1" height="6" fill="#000"/><rect x="619" y="808" width="1" height="10" fill="#000"/><rect x="723" y="664" width="1" height="6" fill="#000"/><rect x="723" y="808" width="1" height="10" fill="#000"/><rect x="203" y="664" width="1" height="179" fill="#000"/><rect x="827" y="664" width="1" height="179" fill="#000"/><rect x="98" y="664" width="2" height="179" fill="#ffb900"/><rect x="930" y="664" width="2" height="179" fill="#19b4ff"/><rect x="99" y="873" width="832" height="48.5" fill="#fff"/><path d="M307.5 877 V917" stroke="#6e8498" stroke-width="1" stroke-dasharray="5 5" fill="none"/><rect x="307" y="873" width="1" height="8" fill="#000"/><rect x="307" y="916" width="1" height="10" fill="#000"/><path d="M411.5 877 V917" stroke="#6e8498" stroke-width="1" stroke-dasharray="5 5" fill="none"/><rect x="411" y="873" width="1" height="8" fill="#000"/><rect x="411" y="916" width="1" height="10" fill="#000"/><path d="M515.5 877 V917" stroke="#6e8498" stroke-width="1" stroke-dasharray="5 5" fill="none"/><rect x="515" y="873" width="1" height="8" fill="#000"/><rect x="515" y="916" width="1" height="10" fill="#000"/><path d="M619.5 877 V917" stroke="#6e8498" stroke-width="1" stroke-dasharray="5 5" fill="none"/><rect x="619" y="873" width="1" height="8" fill="#000"/><rect x="619" y="916" width="1" height="10" fill="#000"/><path d="M723.5 877 V917" stroke="#6e8498" stroke-width="1" stroke-dasharray="5 5" fill="none"/><rect x="723" y="873" width="1" height="8" fill="#000"/><rect x="723" y="916" width="1" height="10" fill="#000"/><rect x="99" y="885" width="832" height="1" fill="#000"/><rect x="99" y="897" width="832" height="1" fill="#000"/><rect x="99" y="909" width="832" height="1" fill="#000"/><rect x="99" y="921" width="832" height="1" fill="#000"/><rect x="203" y="873" width="1" height="77.5" fill="#000"/><rect x="827" y="873" width="1" height="77.5" fill="#000"/><rect x="98" y="873" width="2" height="77.5" fill="#ffb900"/><rect x="930" y="873" width="2" height="77.5" fill="#19b4ff"/></svg>
<div style="top:795.50px;height:12px;line-height:12px;font-size:8px;color:#000;white-space:pre;left:74.70px;">-2.0</div>
<div style="top:779.50px;height:12px;line-height:12px;font-size:8px;color:#000;white-space:pre;left:74.70px;">-1.5</div>
<div style="top:764.50px;height:12px;line-height:12px;font-size:8px;color:#000;white-space:pre;left:74.70px;">-1.0</div>
<div style="top:748.50px;height:12px;line-height:12px;font-size:8px;color:#000;white-space:pre;left:74.70px;">-0.5</div>
<div style="top:732.50px;height:12px;line-height:12px;font-size:8px;color:#000;white-space:pre;left:77.38px;">0.0</div>
<div style="top:716.50px;height:12px;line-height:12px;font-size:8px;color:#000;white-space:pre;left:77.38px;">0.5</div>
<div style="top:700.50px;height:12px;line-height:12px;font-size:8px;color:#000;white-space:pre;left:77.38px;">1.0</div>
<div style="top:684.50px;height:12px;line-height:12px;font-size:8px;color:#000;white-space:pre;left:77.38px;">1.5</div>
<div style="top:668.50px;height:12px;line-height:12px;font-size:8px;color:#000;white-space:pre;left:77.38px;">2.0</div>
<div style="top:819.30px;height:12px;line-height:12px;font-size:8px;color:#000;white-space:pre;left:93.94px;">-1</div>
<div style="top:927.50px;height:12px;line-height:12px;font-size:8px;color:#000;white-space:pre;left:93.94px;">-1</div>
<div style="top:819.30px;height:12px;line-height:12px;font-size:8px;color:#000;white-space:pre;left:200.27px;">0</div>
<div style="top:927.50px;height:12px;line-height:12px;font-size:8px;color:#000;white-space:pre;left:200.27px;">0</div>
<div style="top:819.30px;height:12px;line-height:12px;font-size:8px;color:#000;white-space:pre;left:304.27px;">1</div>
<div style="top:927.50px;height:12px;line-height:12px;font-size:8px;color:#000;white-space:pre;left:304.27px;">1</div>
<div style="top:819.30px;height:12px;line-height:12px;font-size:8px;color:#000;white-space:pre;left:408.27px;">2</div>
<div style="top:927.50px;height:12px;line-height:12px;font-size:8px;color:#000;white-space:pre;left:408.27px;">2</div>
<div style="top:819.30px;height:12px;line-height:12px;font-size:8px;color:#000;white-space:pre;left:512.27px;">3</div>
<div style="top:927.50px;height:12px;line-height:12px;font-size:8px;color:#000;white-space:pre;left:512.27px;">3</div>
<div style="top:819.30px;height:12px;line-height:12px;font-size:8px;color:#000;white-space:pre;left:616.27px;">4</div>
<div style="top:927.50px;height:12px;line-height:12px;font-size:8px;color:#000;white-space:pre;left:616.27px;">4</div>
<div style="top:819.30px;height:12px;line-height:12px;font-size:8px;color:#000;white-space:pre;left:720.27px;">5</div>
<div style="top:927.50px;height:12px;line-height:12px;font-size:8px;color:#000;white-space:pre;left:720.27px;">5</div>
<div style="top:819.30px;height:12px;line-height:12px;font-size:8px;color:#000;white-space:pre;left:824.27px;">6</div>
<div style="top:927.50px;height:12px;line-height:12px;font-size:8px;color:#000;white-space:pre;left:824.27px;">6</div>
<div style="top:819.30px;height:12px;line-height:12px;font-size:8px;color:#000;white-space:pre;left:928.27px;">7</div>
<div style="top:927.50px;height:12px;line-height:12px;font-size:8px;color:#000;white-space:pre;left:928.27px;">7</div>
<div style="top:804.50px;height:15px;line-height:15px;font-size:11px;color:#000;white-space:pre;font-weight:bold;letter-spacing:0.052px;left:933px;">t/s</div>
<div style="top:912.50px;height:15px;line-height:15px;font-size:11px;color:#000;white-space:pre;font-weight:bold;letter-spacing:0.052px;left:933px;">t/s</div>
<div style="left:63.5px;top:739px;width:0;height:0;"><div style="left:-60px;top:-7px;width:120px;height:14px;line-height:14px;text-align:center;font-size:10px;font-weight:bold;transform:rotate(-90deg);white-space:pre;letter-spacing:-0.15px;">Current  GroupA (A)</div></div>
<div style="top:877.80px;height:14px;line-height:14px;font-size:10px;color:#000;white-space:pre;font-weight:bold;letter-spacing:0.077px;left:48.50px;">Bin. Out 1</div>
<div style="top:889.80px;height:14px;line-height:14px;font-size:10px;color:#000;white-space:pre;font-weight:bold;left:78.16px;">Trip</div>
<div style="top:901.80px;height:14px;line-height:14px;font-size:10px;color:#000;white-space:pre;font-weight:bold;left:73.72px;">Start</div>
<div style="left:99px;top:994px;width:832px;height:1px;background:#fafafa;"></div>
<div style="left:99px;top:995px;width:832px;height:15px;background:#f0f0f0;"></div>
<div style="left:116px;top:995px;width:798px;height:15px;background:#cdcdcd;"></div>
<svg style="left:102px;top:997px;" width="10" height="11" viewBox="0 0 10 11"><path d="M6.8 2.5 L3.8 5.5 L6.8 8.5" fill="none" stroke="#404040" stroke-width="2.1"/></svg>
<svg style="left:917px;top:997px;" width="10" height="11" viewBox="0 0 10 11"><path d="M4.7 2.5 L7.7 5.5 L4.7 8.5" fill="none" stroke="#404040" stroke-width="2.1"/></svg>
<div style="left:978px;top:92px;width:936px;height:939px;background:#8092b8;"></div>
<div style="left:979px;top:93px;width:935px;height:21px;background:#4d6082;"></div>
<div style="top:95.50px;height:16px;line-height:16px;font-size:12px;color:#fff;white-space:pre;letter-spacing:-0.078px;left:983px;">Overcurrent Characteristic</div>
<svg style="left:1881px;top:97px;" width="28" height="12" viewBox="0 0 28 12"><path d="M3 1.5 h4 v6 h-4 z M6 1.5 v6 M1.2 7.8 h7.4 M4.9 8 v4" stroke="#e8ecf4" stroke-width="1" fill="none"/>
<path d="M17.5 1.5 L25.5 9.5 M25.5 1.5 L17.5 9.5" stroke="#e8ecf4" stroke-width="1.3" fill="none"/></svg>
<div style="left:979px;top:114px;width:934px;height:916px;background:#f4f4f4;"></div>
<div style="left:982px;top:116px;width:30px;height:912px;background:#e1e1e1;border-left:1px solid #6a6a6a;border-top:1px solid #6a6a6a;border-bottom:1px solid #6a6a6a;box-sizing:border-box;"></div>
<div style="left:1011.5px;top:116px;width:1.5px;height:912px;background:#000;"></div>
<div style="left:1013px;top:116px;width:894px;height:911px;background:#fff;"></div>
<div style="left:1011px;top:116px;width:896px;height:1px;background:#000;"></div>
<div style="left:1011px;top:1027px;width:896px;height:1px;background:#1a1a1a;"></div>
<div style="left:1907px;top:116px;width:1px;height:912px;background:#dcdcdc;"></div>
<svg style="left:0;top:0" width="1020" height="400"><rect x="984.5" y="118.5" width="25" height="25" fill="#e6e6e6" stroke="#c4c4c4" stroke-width="1"/><rect x="984.5" y="145.5" width="25" height="25" fill="#e6e6e6" stroke="#c4c4c4" stroke-width="1"/><rect x="984" y="172" width="26" height="26" fill="#cdcdcd"/><rect x="984" y="199" width="26" height="26" fill="#cdcdcd"/><rect x="984.5" y="226.5" width="25" height="25" fill="#e6e6e6" stroke="#c4c4c4" stroke-width="1"/><rect x="983.5" y="252.5" width="27" height="27" fill="#9a9a9a" stroke="#6c6c6c" stroke-width="1.6"/><rect x="984.5" y="280.5" width="25" height="25" fill="#e6e6e6" stroke="#c4c4c4" stroke-width="1"/><rect x="984.5" y="307.5" width="25" height="25" fill="#e6e6e6" stroke="#c4c4c4" stroke-width="1"/><rect x="984.5" y="334.5" width="25" height="25" fill="#e6e6e6" stroke="#c4c4c4" stroke-width="1"/><rect x="984.5" y="361.5" width="25" height="25" fill="#e6e6e6" stroke="#c4c4c4" stroke-width="1"/><rect x="989" y="123.4" width="16.5" height="3.6" rx=".6" fill="#000"/><rect x="989" y="129.5" width="16.5" height="3.6" rx=".6" fill="#000"/><rect x="989" y="135.6" width="16.5" height="3.6" rx=".6" fill="#000"/><path d="M992.5 150.5 V164 L995.8 161 L998.3 166.2 L1000.6 165.1 L998.1 160.2 L1002.5 159.7 Z" fill="#fff" stroke="#333" stroke-width="1.1" stroke-linejoin="round"/><path d="M996.5 176.0 L987.0 184.5 L996.5 190.5 L996.5 187.0 C1000.5 186.3 1003.3 189.0 1001.8 194.8 C1007.8 189.0 1006.8 179.3 996.5 179.5 Z" fill="#a2a2a2"/><path d="M997.5 203.0 L1007.0 211.5 L997.5 217.5 L997.5 214.0 C993.5 213.3 990.7 216.0 992.2 221.8 C986.2 216.0 987.2 206.3 997.5 206.5 Z" fill="#a2a2a2"/><path d="M998 240 L1005 246.5" stroke="#4a4a4a" stroke-width="2.6" stroke-linecap="round"/><path d="M998.5 240.5 L1004.5 246" stroke="#9a9a9a" stroke-width="1" stroke-linecap="round"/><circle cx="994" cy="236" r="5.6" fill="#f2f6fa" stroke="#8a8a8a" stroke-width="1.1"/><path d="M998 294 L1005 300.5" stroke="#4a4a4a" stroke-width="2.6" stroke-linecap="round"/><path d="M998.5 294.5 L1004.5 300" stroke="#9a9a9a" stroke-width="1" stroke-linecap="round"/><circle cx="994" cy="290" r="5.6" fill="#f2f6fa" stroke="#8a8a8a" stroke-width="1.1"/><path d="M991 290 H997 M994 287 V293" stroke="#555" stroke-width="1.3"/><path d="M998 321 L1005 327.5" stroke="#4a4a4a" stroke-width="2.6" stroke-linecap="round"/><path d="M998.5 321.5 L1004.5 327" stroke="#9a9a9a" stroke-width="1" stroke-linecap="round"/><circle cx="994" cy="317" r="5.6" fill="#f2f6fa" stroke="#8a8a8a" stroke-width="1.1"/><path d="M991 317 H997" stroke="#555" stroke-width="1.4"/><rect x="993" y="262" width="8" height="8" fill="#888" stroke="#000" stroke-width="1.6"/><path d="M993.4 259.8 L1000.6 259.8 L997 255.8 Z" fill="#000"/><path d="M993.4 272.2 L1000.6 272.2 L997 276.2 Z" fill="#000"/><path d="M990.8 262.4 L990.8 269.6 L986.8 266 Z" fill="#000"/><path d="M1003.2 262.4 L1003.2 269.6 L1007.2 266 Z" fill="#000"/><path d="M992.5 352.5 L989.5 348 Q988.7 346 990.5 346 L993 348.5 V341 Q993.8 339.6 994.8 341 V338.8 Q995.8 337.4 996.9 338.8 V338.6 Q997.9 337.4 998.9 338.8 V340 Q999.9 338.9 1000.9 340.2 V349 Q1000.9 353 997.5 354.2 H994.5 Z" fill="#fff" stroke="#444" stroke-width="1" stroke-linejoin="round"/><path d="M994.8 341 V346 M996.9 339 V346 M998.9 339 V346" stroke="#444" stroke-width=".8"/><circle cx="997" cy="374" r="8.6" fill="#fdfdfd" stroke="#111" stroke-width="1.3"/><path d="M988.4 374 H995 M999 374 H1005.6 M997 365.4 V372 M997 376 V382.6" stroke="#111" stroke-width="1.5"/><rect x="995.2" y="372.2" width="3.6" height="3.6" fill="#bbb" stroke="#555" stroke-width=".8"/></svg>
<svg style="left:0;top:0" width="1920" height="1040"><path d="M1100.5 168 V972" stroke="#d2d2d2" stroke-width="1"/><path d="M1128.5 168 V972" stroke="#d2d2d2" stroke-width="1"/><path d="M1151.5 168 V972" stroke="#d2d2d2" stroke-width="1"/><path d="M1171.5 168 V972" stroke="#d2d2d2" stroke-width="1"/><path d="M1187.5 168 V972" stroke="#d2d2d2" stroke-width="1"/><path d="M1202.5 168 V972" stroke="#d2d2d2" stroke-width="1"/><path d="M1216.5 168 V972" stroke="#d2d2d2" stroke-width="1"/><path d="M1303.5 168 V972" stroke="#d2d2d2" stroke-width="1"/><path d="M1354.5 168 V972" stroke="#d2d2d2" stroke-width="1"/><path d="M1391.5 168 V972" stroke="#d2d2d2" stroke-width="1"/><path d="M1419.5 168 V972" stroke="#d2d2d2" stroke-width="1"/><path d="M1442.5 168 V972" stroke="#d2d2d2" stroke-width="1"/><path d="M1461.5 168 V972" stroke="#d2d2d2" stroke-width="1"/><path d="M1478.5 168 V972" stroke="#d2d2d2" stroke-width="1"/><path d="M1493.5 168 V972" stroke="#d2d2d2" stroke-width="1"/><path d="M1506.5 168 V972" stroke="#d2d2d2" stroke-width="1"/><path d="M1594.5 168 V972" stroke="#d2d2d2" stroke-width="1"/><path d="M1645.5 168 V972" stroke="#d2d2d2" stroke-width="1"/><path d="M1681.5 168 V972" stroke="#d2d2d2" stroke-width="1"/><path d="M1709.5 168 V972" stroke="#d2d2d2" stroke-width="1"/><path d="M1733.5 168 V972" stroke="#d2d2d2" stroke-width="1"/><path d="M1752.5 168 V972" stroke="#d2d2d2" stroke-width="1"/><path d="M1769.5 168 V972" stroke="#d2d2d2" stroke-width="1"/><path d="M1784.5 168 V972" stroke="#d2d2d2" stroke-width="1"/><path d="M1797.5 168 V972" stroke="#d2d2d2" stroke-width="1"/><path d="M1096 955.5 H1878" stroke="#d2d2d2" stroke-width="1" stroke-dasharray="9 2"/><path d="M1096 933.5 H1878" stroke="#d2d2d2" stroke-width="1" stroke-dasharray="9 2"/><path d="M1093 916.5 H1878" stroke="#d2d2d2" stroke-width="1"/><path d="M1096 902.5 H1878" stroke="#d2d2d2" stroke-width="1" stroke-dasharray="9 2"/><path d="M1096 890.5 H1878" stroke="#d2d2d2" stroke-width="1" stroke-dasharray="9 2"/><path d="M1096 880.5 H1878" stroke="#d2d2d2" stroke-width="1" stroke-dasharray="9 2"/><path d="M1096 871.5 H1878" stroke="#d2d2d2" stroke-width="1" stroke-dasharray="9 2"/><path d="M1093 863.5 H1878" stroke="#d2d2d2" stroke-width="1"/><path d="M1093 810.5 H1878" stroke="#d2d2d2" stroke-width="1"/><path d="M1096 779.5 H1878" stroke="#d2d2d2" stroke-width="1" stroke-dasharray="9 2"/><path d="M1096 757.5 H1878" stroke="#d2d2d2" stroke-width="1" stroke-dasharray="9 2"/><path d="M1093 740.5 H1878" stroke="#d2d2d2" stroke-width="1"/><path d="M1096 726.5 H1878" stroke="#d2d2d2" stroke-width="1" stroke-dasharray="9 2"/><path d="M1096 714.5 H1878" stroke="#d2d2d2" stroke-width="1" stroke-dasharray="9 2"/><path d="M1096 704.5 H1878" stroke="#d2d2d2" stroke-width="1" stroke-dasharray="9 2"/><path d="M1096 695.5 H1878" stroke="#d2d2d2" stroke-width="1" stroke-dasharray="9 2"/><path d="M1093 687.5 H1878" stroke="#d2d2d2" stroke-width="1"/><path d="M1093 634.5 H1878" stroke="#d2d2d2" stroke-width="1"/><path d="M1096 603.5 H1878" stroke="#d2d2d2" stroke-width="1" stroke-dasharray="9 2"/><path d="M1096 581.5 H1878" stroke="#d2d2d2" stroke-width="1" stroke-dasharray="9 2"/><path d="M1093 564.5 H1878" stroke="#d2d2d2" stroke-width="1"/><path d="M1096 550.5 H1878" stroke="#d2d2d2" stroke-width="1" stroke-dasharray="9 2"/><path d="M1096 539.5 H1878" stroke="#d2d2d2" stroke-width="1" stroke-dasharray="9 2"/><path d="M1096 529.5 H1878" stroke="#d2d2d2" stroke-width="1" stroke-dasharray="9 2"/><path d="M1096 520.5 H1878" stroke="#d2d2d2" stroke-width="1" stroke-dasharray="9 2"/><path d="M1093 511.5 H1878" stroke="#d2d2d2" stroke-width="1"/><path d="M1093 459.5 H1878" stroke="#d2d2d2" stroke-width="1"/><path d="M1096 428.5 H1878" stroke="#d2d2d2" stroke-width="1" stroke-dasharray="9 2"/><path d="M1096 406.5 H1878" stroke="#d2d2d2" stroke-width="1" stroke-dasharray="9 2"/><path d="M1093 389.5 H1878" stroke="#d2d2d2" stroke-width="1"/><path d="M1096 375.5 H1878" stroke="#d2d2d2" stroke-width="1" stroke-dasharray="9 2"/><path d="M1096 363.5 H1878" stroke="#d2d2d2" stroke-width="1" stroke-dasharray="9 2"/><path d="M1096 353.5 H1878" stroke="#d2d2d2" stroke-width="1" stroke-dasharray="9 2"/><path d="M1096 344.5 H1878" stroke="#d2d2d2" stroke-width="1" stroke-dasharray="9 2"/><path d="M1093 336.5 H1878" stroke="#d2d2d2" stroke-width="1"/><path d="M1093 283.5 H1878" stroke="#d2d2d2" stroke-width="1"/><path d="M1096 252.5 H1878" stroke="#d2d2d2" stroke-width="1" stroke-dasharray="9 2"/><path d="M1096 230.5 H1878" stroke="#d2d2d2" stroke-width="1" stroke-dasharray="9 2"/><path d="M1093 213.5 H1878" stroke="#d2d2d2" stroke-width="1"/><path d="M1096 199.5 H1878" stroke="#d2d2d2" stroke-width="1" stroke-dasharray="9 2"/><path d="M1096 187.5 H1878" stroke="#d2d2d2" stroke-width="1" stroke-dasharray="9 2"/><path d="M1096 177.5 H1878" stroke="#d2d2d2" stroke-width="1" stroke-dasharray="9 2"/><path d="M1209.8 168.0 L1210.1 169.2 L1210.7 273.6 L1211.2 316.0 L1211.8 343.0 L1212.3 362.8 L1212.9 378.5 L1213.4 391.4 L1213.9 402.5 L1214.5 412.0 L1215.0 420.5 L1215.5 428.1 L1216.1 435.0 L1216.6 441.3 L1217.1 447.1 L1217.6 452.5 L1218.2 457.5 L1218.7 462.1 L1219.2 466.5 L1219.7 470.6 L1220.2 474.5 L1220.7 478.2 L1221.2 481.7 L1221.7 485.1 L1222.2 488.3 L1222.7 491.3 L1223.2 494.2 L1223.7 497.0 L1224.2 499.7 L1224.7 502.3 L1225.2 504.8 L1225.7 507.2 L1226.2 509.6 L1226.7 511.8 L1227.2 514.0 L1227.6 516.1 L1228.1 518.1 L1228.6 520.1 L1229.1 522.0 L1229.5 523.9 L1230.0 525.7 L1230.5 527.5 L1231.0 529.2 L1231.4 530.9 L1231.9 532.6 L1232.4 534.2 L1232.8 535.7 L1233.3 537.2 L1233.7 538.7 L1234.2 540.2 L1234.6 541.6 L1235.1 543.0 L1235.6 544.4 L1236.0 545.7 L1236.5 547.0 L1236.9 548.3 L1237.3 549.5 L1237.8 550.8 L1238.2 552.0 L1238.7 553.2 L1239.1 554.3 L1239.1 554.3 L1242.2 562.0 L1245.2 568.8 L1248.1 574.9 L1251.0 580.4 L1253.8 585.5 L1256.5 590.1 L1259.2 594.4 L1261.8 598.4 L1264.4 602.1 L1266.9 605.5 L1269.4 608.8 L1271.8 611.9 L1274.2 614.8 L1276.5 617.5 L1278.8 620.1 L1281.0 622.5 L1283.3 624.9 L1285.4 627.1 L1287.6 629.3 L1289.7 631.3 L1291.7 633.3 L1293.8 635.2 L1295.8 637.0 L1297.7 638.7 L1299.7 640.4 L1301.6 642.0 L1303.5 643.6 L1305.3 645.1 L1307.1 646.6 L1308.9 648.0 L1310.7 649.3 L1312.5 650.7 L1314.2 652.0 L1315.9 653.2 L1317.6 654.4 L1319.2 655.6 L1320.9 656.7 L1322.5 657.8 L1324.1 658.9 L1325.7 660.0 L1327.2 661.0 L1328.7 662.0 L1330.3 663.0 L1331.8 664.0 L1333.2 664.9 L1334.7 665.8 L1336.2 666.7 L1337.6 667.6 L1339.0 668.4 L1340.4 669.2 L1341.8 670.1 L1343.2 670.8 L1344.5 671.6 L1345.9 672.4 L1347.2 673.1 L1348.5 673.9 L1349.8 674.6 L1351.1 675.3 L1352.4 676.0 L1353.6 676.7 L1354.9 677.3 L1356.1 678.0 L1357.3 678.6 L1358.5 679.3 L1359.7 679.9 L1360.9 680.5 L1362.1 681.1 L1363.3 681.7 L1364.4 682.3 L1365.6 682.9 L1366.7 683.4 L1367.9 684.0 L1369.0 684.5 L1370.1 685.0 L1371.2 685.6 L1372.3 686.1 L1373.3 686.6 L1374.4 687.1 L1375.5 687.6 L1376.5 688.1 L1377.6 688.6 L1378.6 689.1 L1379.6 689.5 L1380.6 690.0 L1381.6 690.4 L1382.6 690.9 L1383.6 691.3 L1384.6 691.8 L1385.6 692.2 L1386.6 692.6 L1387.5 693.1 L1388.5 693.5 L1389.4 693.9 L1390.4 694.3 L1391.3 694.7 L1392.2 695.1 L1393.2 695.5 L1394.1 695.9 L1395.0 696.2 L1395.9 696.6 L1396.8 697.0 L1397.7 697.3 L1398.5 697.7 L1399.4 698.1 L1400.3 698.4 L1401.2 698.8 L1402.0 699.1 L1402.9 699.5 L1403.7 699.8 L1404.6 700.1 L1405.4 700.5 L1406.2 700.8 L1407.0 701.1 L1407.9 701.4 L1408.7 701.8 L1409.5 702.1 L1410.3 702.4 L1411.1 702.7 L1411.9 703.0 L1411.9 902.4 L1878.0 902.4 L1878.0 837.7 L1424.8 837.7 L1424.8 695.5 L1424.0 695.2 L1423.2 694.9 L1422.4 694.6 L1421.6 694.2 L1420.8 693.9 L1420.0 693.6 L1419.1 693.3 L1418.3 692.9 L1417.5 692.6 L1416.6 692.3 L1415.8 691.9 L1414.9 691.6 L1414.0 691.2 L1413.2 690.9 L1412.3 690.5 L1411.4 690.2 L1410.5 689.8 L1409.6 689.4 L1408.7 689.1 L1407.8 688.7 L1406.9 688.3 L1406.0 687.9 L1405.0 687.5 L1404.1 687.1 L1403.2 686.7 L1402.2 686.3 L1401.3 685.9 L1400.3 685.5 L1399.3 685.0 L1398.3 684.6 L1397.4 684.2 L1396.4 683.7 L1395.4 683.3 L1394.3 682.8 L1393.3 682.4 L1392.3 681.9 L1391.3 681.4 L1390.2 681.0 L1389.2 680.5 L1388.1 680.0 L1387.0 679.5 L1386.0 679.0 L1384.9 678.4 L1383.8 677.9 L1382.7 677.4 L1381.5 676.8 L1380.4 676.3 L1379.3 675.7 L1378.1 675.2 L1377.0 674.6 L1375.8 674.0 L1374.6 673.4 L1373.4 672.8 L1372.2 672.2 L1371.0 671.5 L1369.8 670.9 L1368.5 670.3 L1367.3 669.6 L1366.0 668.9 L1364.7 668.2 L1363.5 667.5 L1362.2 666.8 L1360.8 666.1 L1359.5 665.3 L1358.2 664.6 L1356.8 663.8 L1355.4 663.0 L1354.0 662.2 L1352.6 661.4 L1351.2 660.5 L1349.8 659.6 L1348.3 658.8 L1346.9 657.9 L1345.4 656.9 L1343.9 656.0 L1342.3 655.0 L1340.8 654.0 L1339.2 653.0 L1337.7 651.9 L1336.1 650.9 L1334.4 649.7 L1332.8 648.6 L1331.1 647.4 L1329.5 646.2 L1327.7 645.0 L1326.0 643.7 L1324.3 642.4 L1322.5 641.0 L1320.7 639.6 L1318.8 638.2 L1317.0 636.7 L1315.1 635.1 L1313.2 633.5 L1311.2 631.9 L1309.3 630.1 L1307.3 628.3 L1305.2 626.5 L1303.1 624.5 L1301.0 622.5 L1298.9 620.3 L1296.7 618.1 L1294.5 615.8 L1292.2 613.3 L1289.9 610.8 L1287.6 608.1 L1285.2 605.2 L1282.8 602.2 L1280.3 598.9 L1277.8 595.5 L1275.2 591.8 L1272.6 587.9 L1269.9 583.6 L1267.1 579.1 L1264.3 574.1 L1261.4 568.6 L1258.5 562.6 L1255.5 555.9 L1252.4 548.3 L1249.2 539.7 L1249.2 539.7 L1248.8 538.6 L1248.4 537.4 L1248.0 536.2 L1247.6 534.9 L1247.2 533.7 L1246.8 532.4 L1246.4 531.0 L1245.9 529.7 L1245.5 528.3 L1245.1 526.9 L1244.7 525.5 L1244.3 524.0 L1243.8 522.5 L1243.4 521.0 L1243.0 519.4 L1242.6 517.8 L1242.1 516.2 L1241.7 514.5 L1241.3 512.7 L1240.9 510.9 L1240.4 509.1 L1240.0 507.2 L1239.6 505.3 L1239.1 503.3 L1238.7 501.2 L1238.2 499.1 L1237.8 496.9 L1237.3 494.7 L1236.9 492.3 L1236.5 489.9 L1236.0 487.4 L1235.6 484.8 L1235.1 482.1 L1234.7 479.3 L1234.2 476.3 L1233.7 473.3 L1233.3 470.1 L1232.8 466.7 L1232.4 463.2 L1231.9 459.5 L1231.4 455.6 L1231.0 451.4 L1230.5 447.0 L1230.0 442.4 L1229.6 437.4 L1229.1 432.0 L1228.6 426.2 L1228.1 419.9 L1227.6 413.0 L1227.2 405.4 L1226.7 396.9 L1226.2 387.3 L1225.7 376.3 L1225.2 363.4 L1224.7 347.8 L1224.2 328.0 L1223.7 301.1 L1223.2 259.0 L1222.9 168.0 Z" fill="rgba(150,150,150,0.18)" stroke="#c4c4c4" stroke-width="1" stroke-linejoin="round"/><path d="M1216.3 168.0 L1216.5 230.6 L1216.8 265.0 L1217.0 288.7 L1217.3 306.6 L1217.5 321.2 L1217.8 333.3 L1218.1 343.8 L1218.3 353.0 L1218.5 361.2 L1218.8 368.6 L1219.0 375.3 L1219.3 381.4 L1219.5 387.1 L1219.8 392.4 L1220.0 397.3 L1220.3 402.0 L1220.5 406.3 L1220.8 410.4 L1221.0 414.3 L1221.3 418.0 L1221.5 421.5 L1221.7 424.9 L1222.0 428.1 L1222.2 431.2 L1222.5 434.1 L1222.7 437.0 L1223.0 439.7 L1223.2 442.3 L1223.4 444.9 L1223.7 447.3 L1223.9 449.7 L1224.1 452.0 L1224.4 454.2 L1224.6 456.4 L1224.9 458.5 L1225.1 460.5 L1225.3 462.5 L1225.6 464.4 L1225.8 466.3 L1226.0 468.1 L1226.3 469.9 L1226.5 471.6 L1226.7 473.3 L1227.0 475.0 L1227.2 476.6 L1227.4 478.2 L1227.7 479.7 L1227.9 481.2 L1228.1 482.7 L1228.1 482.7 L1231.1 499.6 L1234.0 513.1 L1236.8 524.3 L1239.6 533.9 L1242.3 542.2 L1245.0 549.6 L1247.6 556.2 L1250.1 562.2 L1252.6 567.6 L1255.1 572.6 L1257.5 577.2 L1259.8 581.4 L1262.2 585.4 L1264.4 589.0 L1266.7 592.5 L1268.9 595.8 L1271.0 598.8 L1273.1 601.7 L1275.2 604.5 L1277.3 607.1 L1279.3 609.6 L1281.3 612.0 L1283.2 614.2 L1285.2 616.4 L1287.1 618.5 L1288.9 620.5 L1290.8 622.4 L1292.6 624.2 L1294.4 626.0 L1296.1 627.7 L1297.9 629.4 L1299.6 631.0 L1301.3 632.5 L1303.0 634.0 L1304.6 635.5 L1306.3 636.9 L1307.9 638.2 L1309.4 639.5 L1311.0 640.8 L1312.6 642.1 L1314.1 643.3 L1315.6 644.5 L1317.1 645.6 L1318.6 646.7 L1320.0 647.8 L1321.5 648.9 L1322.9 649.9 L1324.3 650.9 L1325.7 651.9 L1327.1 652.9 L1328.5 653.8 L1329.8 654.7 L1331.1 655.6 L1332.5 656.5 L1333.8 657.4 L1335.1 658.2 L1336.3 659.0 L1337.6 659.8 L1338.9 660.6 L1340.1 661.4 L1341.3 662.2 L1342.6 662.9 L1343.8 663.6 L1345.0 664.4 L1346.1 665.1 L1347.3 665.8 L1348.5 666.4 L1349.6 667.1 L1350.8 667.8 L1351.9 668.4 L1353.0 669.1 L1354.1 669.7 L1355.3 670.3 L1356.3 670.9 L1357.4 671.5 L1358.5 672.1 L1359.6 672.6 L1360.6 673.2 L1361.7 673.8 L1362.7 674.3 L1363.7 674.9 L1364.8 675.4 L1365.8 675.9 L1366.8 676.4 L1367.8 676.9 L1368.8 677.4 L1369.8 677.9 L1370.7 678.4 L1371.7 678.9 L1372.7 679.4 L1373.6 679.9 L1374.6 680.3 L1375.5 680.8 L1376.4 681.2 L1377.3 681.7 L1378.3 682.1 L1379.2 682.5 L1380.1 683.0 L1381.0 683.4 L1381.9 683.8 L1382.8 684.2 L1383.6 684.6 L1384.5 685.0 L1385.4 685.4 L1386.2 685.8 L1387.1 686.2 L1387.9 686.6 L1388.8 687.0 L1389.6 687.3 L1390.5 687.7 L1391.3 688.1 L1392.1 688.4 L1392.9 688.8 L1393.7 689.2 L1394.5 689.5 L1395.3 689.9 L1396.1 690.2 L1396.9 690.5 L1397.7 690.9 L1398.5 691.2 L1399.3 691.5 L1400.1 691.9 L1400.8 692.2 L1401.6 692.5 L1402.3 692.8 L1403.1 693.1 L1403.8 693.4 L1404.6 693.7 L1405.3 694.1 L1406.1 694.4 L1406.8 694.7 L1407.5 694.9 L1408.2 695.2 L1409.0 695.5 L1409.7 695.8 L1410.4 696.1 L1411.1 696.4 L1411.8 696.7 L1412.5 696.9 L1413.2 697.2 L1413.9 697.5 L1414.6 697.8 L1415.3 698.0 L1415.9 698.3 L1416.6 698.5 L1417.3 698.8 L1418.0 699.1 L1418.6 699.3 L1419.3 699.6" fill="none" stroke="#2b9a33" stroke-width="1.6"/><path d="M1419.3 699.6 V863.4 H1878" fill="none" stroke="#973a9f" stroke-width="1.8"/><circle cx="1267.3" cy="593.4" r="4.2" fill="none" stroke="#7e7e7e" stroke-width="1.7"/><circle cx="1331.8" cy="656.0" r="4.2" fill="none" stroke="#7e7e7e" stroke-width="1.7"/><circle cx="1406.0" cy="694.3" r="4.2" fill="none" stroke="#7e7e7e" stroke-width="1.7"/><circle cx="1431.3" cy="863.4" r="4.2" fill="none" stroke="#7e7e7e" stroke-width="1.7"/><circle cx="1452.4" cy="863.4" r="4.2" fill="none" stroke="#7e7e7e" stroke-width="1.7"/><circle cx="1267.3" cy="593.4" r="7.3" fill="none" stroke="#0a14e6" stroke-width="1.9"/><path d="M1093.5 168.5 H1878.5 V972.5 H1093.5 Z" fill="none" stroke="#000" stroke-width="1.2"/><rect x="1100" y="168" width="1.2" height="3.5" fill="#000"/><rect x="1100" y="969.5" width="1.2" height="6" fill="#000"/><rect x="1128" y="168" width="1.2" height="6" fill="#000"/><rect x="1128" y="967.5" width="1.2" height="10" fill="#000"/><rect x="1151" y="168" width="1.2" height="3.5" fill="#000"/><rect x="1151" y="969.5" width="1.2" height="6" fill="#000"/><rect x="1171" y="168" width="1.2" height="3.5" fill="#000"/><rect x="1171" y="969.5" width="1.2" height="6" fill="#000"/><rect x="1187" y="168" width="1.2" height="3.5" fill="#000"/><rect x="1187" y="969.5" width="1.2" height="6" fill="#000"/><rect x="1202" y="168" width="1.2" height="3.5" fill="#000"/><rect x="1202" y="969.5" width="1.2" height="6" fill="#000"/><rect x="1216" y="168" width="1.2" height="6" fill="#000"/><rect x="1216" y="967.5" width="1.2" height="10" fill="#000"/><rect x="1303" y="168" width="1.2" height="6" fill="#000"/><rect x="1303" y="967.5" width="1.2" height="10" fill="#000"/><rect x="1354" y="168" width="1.2" height="3.5" fill="#000"/><rect x="1354" y="969.5" width="1.2" height="6" fill="#000"/><rect x="1391" y="168" width="1.2" height="3.5" fill="#000"/><rect x="1391" y="969.5" width="1.2" height="6" fill="#000"/><rect x="1419" y="168" width="1.2" height="6" fill="#000"/><rect x="1419" y="967.5" width="1.2" height="10" fill="#000"/><rect x="1442" y="168" width="1.2" height="3.5" fill="#000"/><rect x="1442" y="969.5" width="1.2" height="6" fill="#000"/><rect x="1461" y="168" width="1.2" height="3.5" fill="#000"/><rect x="1461" y="969.5" width="1.2" height="6" fill="#000"/><rect x="1478" y="168" width="1.2" height="3.5" fill="#000"/><rect x="1478" y="969.5" width="1.2" height="6" fill="#000"/><rect x="1493" y="168" width="1.2" height="3.5" fill="#000"/><rect x="1493" y="969.5" width="1.2" height="6" fill="#000"/><rect x="1506" y="168" width="1.2" height="6" fill="#000"/><rect x="1506" y="967.5" width="1.2" height="10" fill="#000"/><rect x="1594" y="168" width="1.2" height="6" fill="#000"/><rect x="1594" y="967.5" width="1.2" height="10" fill="#000"/><rect x="1645" y="168" width="1.2" height="3.5" fill="#000"/><rect x="1645" y="969.5" width="1.2" height="6" fill="#000"/><rect x="1681" y="168" width="1.2" height="3.5" fill="#000"/><rect x="1681" y="969.5" width="1.2" height="6" fill="#000"/><rect x="1709" y="168" width="1.2" height="6" fill="#000"/><rect x="1709" y="967.5" width="1.2" height="10" fill="#000"/><rect x="1733" y="168" width="1.2" height="3.5" fill="#000"/><rect x="1733" y="969.5" width="1.2" height="6" fill="#000"/><rect x="1752" y="168" width="1.2" height="3.5" fill="#000"/><rect x="1752" y="969.5" width="1.2" height="6" fill="#000"/><rect x="1769" y="168" width="1.2" height="3.5" fill="#000"/><rect x="1769" y="969.5" width="1.2" height="6" fill="#000"/><rect x="1784" y="168" width="1.2" height="3.5" fill="#000"/><rect x="1784" y="969.5" width="1.2" height="6" fill="#000"/><rect x="1797" y="168" width="1.2" height="6" fill="#000"/><rect x="1797" y="967.5" width="1.2" height="10" fill="#000"/><rect x="1091" y="955" width="5.5" height="1.2" fill="#000"/><rect x="1875" y="955" width="3" height="1.2" fill="#000"/><rect x="1091" y="933" width="5.5" height="1.2" fill="#000"/><rect x="1875" y="933" width="3" height="1.2" fill="#000"/><rect x="1088" y="916" width="11.5" height="1.2" fill="#000"/><rect x="1873" y="916" width="5" height="1.2" fill="#000"/><rect x="1091" y="902" width="5.5" height="1.2" fill="#000"/><rect x="1875" y="902" width="3" height="1.2" fill="#000"/><rect x="1091" y="890" width="5.5" height="1.2" fill="#000"/><rect x="1875" y="890" width="3" height="1.2" fill="#000"/><rect x="1091" y="880" width="5.5" height="1.2" fill="#000"/><rect x="1875" y="880" width="3" height="1.2" fill="#000"/><rect x="1091" y="871" width="5.5" height="1.2" fill="#000"/><rect x="1875" y="871" width="3" height="1.2" fill="#000"/><rect x="1088" y="863" width="11.5" height="1.2" fill="#000"/><rect x="1873" y="863" width="5" height="1.2" fill="#000"/><rect x="1088" y="810" width="11.5" height="1.2" fill="#000"/><rect x="1873" y="810" width="5" height="1.2" fill="#000"/><rect x="1091" y="779" width="5.5" height="1.2" fill="#000"/><rect x="1875" y="779" width="3" height="1.2" fill="#000"/><rect x="1091" y="757" width="5.5" height="1.2" fill="#000"/><rect x="1875" y="757" width="3" height="1.2" fill="#000"/><rect x="1088" y="740" width="11.5" height="1.2" fill="#000"/><rect x="1873" y="740" width="5" height="1.2" fill="#000"/><rect x="1091" y="726" width="5.5" height="1.2" fill="#000"/><rect x="1875" y="726" width="3" height="1.2" fill="#000"/><rect x="1091" y="714" width="5.5" height="1.2" fill="#000"/><rect x="1875" y="714" width="3" height="1.2" fill="#000"/><rect x="1091" y="704" width="5.5" height="1.2" fill="#000"/><rect x="1875" y="704" width="3" height="1.2" fill="#000"/><rect x="1091" y="695" width="5.5" height="1.2" fill="#000"/><rect x="1875" y="695" width="3" height="1.2" fill="#000"/><rect x="1088" y="687" width="11.5" height="1.2" fill="#000"/><rect x="1873" y="687" width="5" height="1.2" fill="#000"/><rect x="1088" y="634" width="11.5" height="1.2" fill="#000"/><rect x="1873" y="634" width="5" height="1.2" fill="#000"/><rect x="1091" y="603" width="5.5" height="1.2" fill="#000"/><rect x="1875" y="603" width="3" height="1.2" fill="#000"/><rect x="1091" y="581" width="5.5" height="1.2" fill="#000"/><rect x="1875" y="581" width="3" height="1.2" fill="#000"/><rect x="1088" y="564" width="11.5" height="1.2" fill="#000"/><rect x="1873" y="564" width="5" height="1.2" fill="#000"/><rect x="1091" y="550" width="5.5" height="1.2" fill="#000"/><rect x="1875" y="550" width="3" height="1.2" fill="#000"/><rect x="1091" y="539" width="5.5" height="1.2" fill="#000"/><rect x="1875" y="539" width="3" height="1.2" fill="#000"/><rect x="1091" y="529" width="5.5" height="1.2" fill="#000"/><rect x="1875" y="529" width="3" height="1.2" fill="#000"/><rect x="1091" y="520" width="5.5" height="1.2" fill="#000"/><rect x="1875" y="520" width="3" height="1.2" fill="#000"/><rect x="1088" y="511" width="11.5" height="1.2" fill="#000"/><rect x="1873" y="511" width="5" height="1.2" fill="#000"/><rect x="1088" y="459" width="11.5" height="1.2" fill="#000"/><rect x="1873" y="459" width="5" height="1.2" fill="#000"/><rect x="1091" y="428" width="5.5" height="1.2" fill="#000"/><rect x="1875" y="428" width="3" height="1.2" fill="#000"/><rect x="1091" y="406" width="5.5" height="1.2" fill="#000"/><rect x="1875" y="406" width="3" height="1.2" fill="#000"/><rect x="1088" y="389" width="11.5" height="1.2" fill="#000"/><rect x="1873" y="389" width="5" height="1.2" fill="#000"/><rect x="1091" y="375" width="5.5" height="1.2" fill="#000"/><rect x="1875" y="375" width="3" height="1.2" fill="#000"/><rect x="1091" y="363" width="5.5" height="1.2" fill="#000"/><rect x="1875" y="363" width="3" height="1.2" fill="#000"/><rect x="1091" y="353" width="5.5" height="1.2" fill="#000"/><rect x="1875" y="353" width="3" height="1.2" fill="#000"/><rect x="1091" y="344" width="5.5" height="1.2" fill="#000"/><rect x="1875" y="344" width="3" height="1.2" fill="#000"/><rect x="1088" y="336" width="11.5" height="1.2" fill="#000"/><rect x="1873" y="336" width="5" height="1.2" fill="#000"/><rect x="1088" y="283" width="11.5" height="1.2" fill="#000"/><rect x="1873" y="283" width="5" height="1.2" fill="#000"/><rect x="1091" y="252" width="5.5" height="1.2" fill="#000"/><rect x="1875" y="252" width="3" height="1.2" fill="#000"/><rect x="1091" y="230" width="5.5" height="1.2" fill="#000"/><rect x="1875" y="230" width="3" height="1.2" fill="#000"/><rect x="1088" y="213" width="11.5" height="1.2" fill="#000"/><rect x="1873" y="213" width="5" height="1.2" fill="#000"/><rect x="1091" y="199" width="5.5" height="1.2" fill="#000"/><rect x="1875" y="199" width="3" height="1.2" fill="#000"/><rect x="1091" y="187" width="5.5" height="1.2" fill="#000"/><rect x="1875" y="187" width="3" height="1.2" fill="#000"/><rect x="1091" y="177" width="5.5" height="1.2" fill="#000"/><rect x="1875" y="177" width="3" height="1.2" fill="#000"/></svg>
<div style="top:205.64px;height:14px;line-height:14px;font-size:10px;color:#111;white-space:pre;left:1057.16px;">500</div>
<div style="top:275.56px;height:14px;line-height:14px;font-size:10px;color:#111;white-space:pre;left:1057.16px;">200</div>
<div style="top:328.46px;height:14px;line-height:14px;font-size:10px;color:#111;white-space:pre;left:1057.16px;">100</div>
<div style="top:381.36px;height:14px;line-height:14px;font-size:10px;color:#111;white-space:pre;left:1059.94px;">50</div>
<div style="top:451.28px;height:14px;line-height:14px;font-size:10px;color:#111;white-space:pre;left:1059.94px;">20</div>
<div style="top:504.18px;height:14px;line-height:14px;font-size:10px;color:#111;white-space:pre;left:1059.94px;">10</div>
<div style="top:557.08px;height:14px;line-height:14px;font-size:10px;color:#111;white-space:pre;left:1062.72px;">5</div>
<div style="top:627.00px;height:14px;line-height:14px;font-size:10px;color:#111;white-space:pre;left:1062.72px;">2</div>
<div style="top:679.90px;height:14px;line-height:14px;font-size:10px;color:#111;white-space:pre;left:1062.72px;">1</div>
<div style="top:732.80px;height:14px;line-height:14px;font-size:10px;color:#111;white-space:pre;left:1058.55px;">0.5</div>
<div style="top:802.72px;height:14px;line-height:14px;font-size:10px;color:#111;white-space:pre;left:1058.55px;">0.2</div>
<div style="top:855.62px;height:14px;line-height:14px;font-size:10px;color:#111;white-space:pre;left:1058.55px;">0.1</div>
<div style="top:908.52px;height:14px;line-height:14px;font-size:10px;color:#111;white-space:pre;left:1055.77px;">0.05</div>
<div style="top:979.70px;height:14px;line-height:14px;font-size:10px;color:#111;white-space:pre;left:1120.44px;">0.5</div>
<div style="top:979.70px;height:14px;line-height:14px;font-size:10px;color:#111;white-space:pre;left:1212.12px;">1</div>
<div style="top:979.70px;height:14px;line-height:14px;font-size:10px;color:#111;white-space:pre;left:1299.63px;">2</div>
<div style="top:979.70px;height:14px;line-height:14px;font-size:10px;color:#111;white-space:pre;left:1415.31px;">5</div>
<div style="top:979.70px;height:14px;line-height:14px;font-size:10px;color:#111;white-space:pre;left:1500.04px;">10</div>
<div style="top:979.70px;height:14px;line-height:14px;font-size:10px;color:#111;white-space:pre;left:1587.55px;">20</div>
<div style="top:979.70px;height:14px;line-height:14px;font-size:10px;color:#111;white-space:pre;left:1703.23px;">50</div>
<div style="top:979.70px;height:14px;line-height:14px;font-size:10px;color:#111;white-space:pre;left:1787.96px;">100</div>
<div style="top:131.00px;height:16px;line-height:16px;font-size:12px;color:#000;white-space:pre;font-weight:bold;letter-spacing:-0.362px;left:1431.50px;">Fault: L1-E</div>
<div style="top:145.00px;height:16px;line-height:16px;font-size:12px;color:#000;white-space:pre;font-weight:bold;letter-spacing:-0.201px;left:1430.75px;">Shot Mode</div>
<div style="top:996.20px;height:16px;line-height:16px;font-size:12px;color:#000;white-space:pre;font-weight:bold;letter-spacing:0.115px;left:1472.70px;">I (In)</div>
<div style="left:1034.5px;top:571px;width:0;height:0;"><div style="left:-30px;top:-8px;width:60px;height:16px;line-height:16px;text-align:center;font-size:12px;font-weight:bold;transform:rotate(-90deg);white-space:pre;">t (s)</div></div>
<div style="left:1808px;top:118px;width:79px;height:21px;background:#e1e1e1;border:1px solid #adadad;box-sizing:border-box;"></div>
<div style="top:121.50px;height:15px;line-height:15px;font-size:11px;color:#000;white-space:pre;letter-spacing:-0.288px;left:1814px;">Export to CSV</div>
<div style="left:1883px;top:114px;width:17px;height:16px;background:#ffd800;"></div>
<div style="top:112.70px;height:16px;line-height:16px;font-size:12px;color:#000;white-space:pre;font-weight:bold;left:1887.84px;">?</div>
<svg style="left:0;top:0" width="1920" height="1040"><rect x="1883" y="1001" width="24" height="24" fill="#f1f1f1"/><path d="M1903.1 1011.6 L1905.8 1011.8 L1905.8 1014.2 L1903.1 1014.4 L1902.7 1015.8 L1905.0 1017.4 L1903.8 1019.5 L1901.3 1018.2 L1900.2 1019.3 L1901.5 1021.8 L1899.4 1023.0 L1897.8 1020.7 L1896.4 1021.1 L1896.2 1023.8 L1893.8 1023.8 L1893.6 1021.1 L1892.2 1020.7 L1890.6 1023.0 L1888.5 1021.8 L1889.8 1019.3 L1888.7 1018.2 L1886.2 1019.5 L1885.0 1017.4 L1887.3 1015.8 L1886.9 1014.4 L1884.2 1014.2 L1884.2 1011.8 L1886.9 1011.6 L1887.3 1010.2 L1885.0 1008.6 L1886.2 1006.5 L1888.7 1007.8 L1889.8 1006.7 L1888.5 1004.2 L1890.6 1003.0 L1892.2 1005.3 L1893.6 1004.9 L1893.8 1002.2 L1896.2 1002.2 L1896.4 1004.9 L1897.8 1005.3 L1899.4 1003.0 L1901.5 1004.2 L1900.2 1006.7 L1901.3 1007.8 L1903.8 1006.5 L1905.0 1008.6 L1902.7 1010.2 Z" fill="#e9eef7" stroke="#858585" stroke-width="1" stroke-linejoin="round"/><circle cx="1895" cy="1013" r="5.6" fill="none" stroke="#fafcff" stroke-width="2"/><circle cx="1895" cy="1013" r="2.6" fill="#eef2f8" stroke="#5a5a5a" stroke-width="1.2"/></svg>
<div style="left:0px;top:1043px;width:1920px;height:37px;background:#007acc;"></div>
<div style="left:1px;top:1046px;width:28px;height:32px;background:#b5fbe9;border-left:1px solid #f4fffc;border-top:1px solid #f4fffc;border-right:1px solid #9aa;border-bottom:1px solid #9aa;box-sizing:border-box;"></div>
<div style="top:1053.50px;height:16px;line-height:16px;font-size:12px;color:#14143c;white-space:pre;letter-spacing:-0.833px;left:6.5px;">IA1</div>
<div style="left:29px;top:1046px;width:28px;height:32px;background:#b5fbe9;border-left:1px solid #f4fffc;border-top:1px solid #f4fffc;border-right:1px solid #9aa;border-bottom:1px solid #9aa;box-sizing:border-box;"></div>
<div style="top:1053.50px;height:16px;line-height:16px;font-size:12px;color:#14143c;white-space:pre;letter-spacing:-0.833px;left:34.5px;">IA2</div>
<div style="left:57px;top:1046px;width:28px;height:32px;background:#b5fbe9;border-left:1px solid #f4fffc;border-top:1px solid #f4fffc;border-right:1px solid #9aa;border-bottom:1px solid #9aa;box-sizing:border-box;"></div>
<div style="top:1053.50px;height:16px;line-height:16px;font-size:12px;color:#14143c;white-space:pre;letter-spacing:-0.833px;left:62.5px;">IA3</div>
<div style="left:87.5px;top:1045px;width:1.5px;height:33px;background:#bccbdc;"></div>
<div style="left:94px;top:1046px;width:29.5px;height:32px;background:#fffdf6;border-left:1px solid #fff;border-top:1px solid #fff;border-right:1px solid #aaa;border-bottom:1px solid #aaa;box-sizing:border-box;"></div>
<div style="top:1046.50px;height:15px;line-height:15px;font-size:11px;color:#000;white-space:pre;font-weight:bold;left:101.47px;">C1</div>
<div style="left:124px;top:1046px;width:29.5px;height:32px;background:#fffdf6;border-left:1px solid #fff;border-top:1px solid #fff;border-right:1px solid #aaa;border-bottom:1px solid #aaa;box-sizing:border-box;"></div>
<div style="top:1046.50px;height:15px;line-height:15px;font-size:11px;color:#000;white-space:pre;font-weight:bold;left:131.47px;">C2</div>
<svg style="left:90px;top:1060px;" width="70" height="20" viewBox="0 0 70 20"><circle cx="19" cy="10" r="5" fill="none" stroke="#222" stroke-width="1.3"/><circle cx="49" cy="10" r="5" fill="none" stroke="#222" stroke-width="1.3"/></svg>
<div style="left:1456.4px;top:1045px;width:1.7px;height:33px;background:#d3ddec;"></div>
<div style="left:1588.4px;top:1045px;width:1.7px;height:33px;background:#d3ddec;"></div>
<div style="left:1594.4px;top:1045px;width:1.7px;height:33px;background:#d3ddec;"></div>
<div style="left:1600.4px;top:1045px;width:1.7px;height:33px;background:#d3ddec;"></div>
<div style="left:1735.4px;top:1045px;width:1.7px;height:33px;background:#d3ddec;"></div>
<div style="left:1837.4px;top:1045px;width:1.7px;height:33px;background:#d3ddec;"></div>
<div style="top:1053.95px;height:16.5px;line-height:16.5px;font-size:12.5px;color:#06122c;white-space:pre;font-family:'Liberation Mono',monospace;letter-spacing:-0.559px;left:1463px;">St. Cond.: Immed.</div>
<div style="top:1054.00px;height:16px;line-height:16px;font-size:12px;color:#0a1630;white-space:pre;letter-spacing:-0.002px;left:1607px;">Running Room :  None</div>
<svg style="left:0;top:0" width="1920" height="1080"><path d="M1752 1051 L1769 1055 L1767 1067 L1750 1063 Z" fill="#3a62d8" stroke="#8aa6e8" stroke-width="1"/><path d="M1750 1063 L1767 1067 L1759 1075 L1740 1070 Z" fill="#8c98a8" stroke="#c8d0dc" stroke-width=".8"/><path d="M1744 1069.5 L1758 1073 L1764 1067.5" fill="none" stroke="#596270" stroke-width="1.6"/><path d="M1767 1064 C1772 1059 1776 1066 1781 1062 C1786 1055 1798 1058 1799 1063 C1800 1069 1792 1072 1795 1076 C1800 1079 1804 1074 1806 1068" fill="none" stroke="#0a2cf0" stroke-width="1.1"/><path d="M1782 1052 L1793 1064 M1794 1052 L1782 1065" stroke="#e8483a" stroke-width="2.2" stroke-linecap="round"/><path d="M1807 1051 L1826 1056 L1834 1064 L1833 1073 L1813 1069 L1806 1062 Z" fill="#e9e9e9" stroke="#111" stroke-width="1.2" stroke-linejoin="round"/><path d="M1807 1051 L1813 1061 L1813 1069 M1813 1061 L1834 1064.5" fill="none" stroke="#111" stroke-width="1.2"/><path d="M1807.5 1053 L1812 1061 L1812 1067.5 L1807 1062 Z" fill="#35b8a8"/><path d="M1806 1062 L1811.5 1076 L1813 1069" fill="none" stroke="#111" stroke-width="1"/><rect x="1814.5" y="1065.5" width="2.2" height="2.2" fill="#fff" stroke="#000" stroke-width=".9"/><circle cx="1853" cy="1062" r="10" fill="#ff0000"/><path d="M1897 1060.5 H1902.5 L1899.75 1063.5 Z" fill="#111"/></svg>
<div style="top:1054.50px;height:16px;line-height:16px;font-size:12px;color:#0a1630;white-space:pre;letter-spacing:-0.109px;left:1867px;">AMT</div>
</body></html>
